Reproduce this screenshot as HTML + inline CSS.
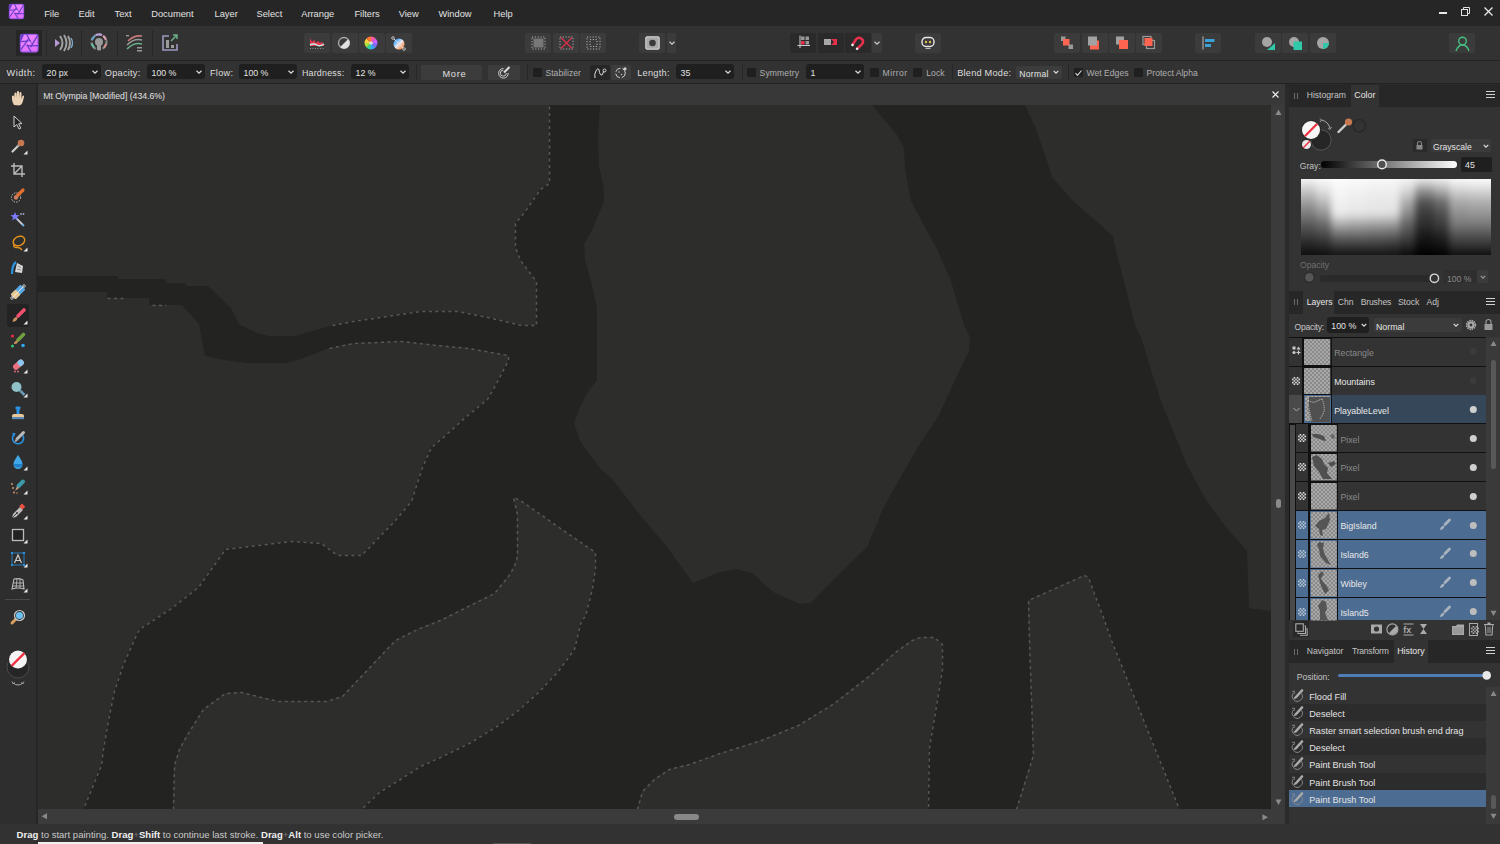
<!DOCTYPE html>
<html><head><meta charset="utf-8">
<style>
*{box-sizing:border-box}
html,body{margin:0;padding:0}
body{width:1500px;height:844px;overflow:hidden;position:relative;background:#2e2e2e;font-family:"Liberation Sans",sans-serif;color:#ddd}
.a{position:absolute}
.t{position:absolute;white-space:nowrap;line-height:1}
svg{position:absolute;overflow:visible}
</style></head><body>
<div class="a" style="left:0px;top:0px;width:1500px;height:26px;background:#262626;"></div>
<svg style="left:9px;top:4px;" width="15" height="15" viewBox="0 0 15 15"><defs><linearGradient id="lg9" x1="0" y1="0" x2="0.3" y2="1"><stop offset="0" stop-color="#f08cff"/><stop offset="1" stop-color="#e070fa"/></linearGradient></defs>
<g transform="scale(0.15)">
<rect x="0" y="0" width="100" height="100" rx="14" fill="url(#lg9)"/>
<path d="M0,14 Q0,0 14,0 L24,0 L0,52 Z" fill="#6a3ec8"/>
<g stroke="#6a3ec8" stroke-width="7" fill="none">
<line x1="36" y1="0" x2="62" y2="52"/>
<line x1="100" y1="2" x2="58" y2="72"/>
<line x1="36" y1="64" x2="100" y2="64"/>
<line x1="38" y1="58" x2="62" y2="100"/>
<line x1="0" y1="92" x2="46" y2="28"/>
<line x1="0" y1="42" x2="58" y2="38"/>
</g>
<circle cx="50" cy="48" r="9" fill="#f08cff"/>
<rect x="1.5" y="1.5" width="97" height="97" rx="13" fill="none" stroke="#7a48d8" stroke-width="5"/>
</g></svg>
<div class="t" style="left:44.20px;top:10.00px;font-size:9.3px;color:#e2e2e2;">File</div>
<div class="t" style="left:78.50px;top:10.00px;font-size:9.3px;color:#e2e2e2;">Edit</div>
<div class="t" style="left:114.50px;top:10.00px;font-size:9.3px;color:#e2e2e2;">Text</div>
<div class="t" style="left:151.20px;top:10.00px;font-size:9.3px;color:#e2e2e2;">Document</div>
<div class="t" style="left:214.50px;top:10.00px;font-size:9.3px;color:#e2e2e2;">Layer</div>
<div class="t" style="left:256.50px;top:10.00px;font-size:9.3px;color:#e2e2e2;">Select</div>
<div class="t" style="left:301.20px;top:10.00px;font-size:9.3px;color:#e2e2e2;">Arrange</div>
<div class="t" style="left:354.40px;top:10.00px;font-size:9.3px;color:#e2e2e2;">Filters</div>
<div class="t" style="left:398.70px;top:10.00px;font-size:9.3px;color:#e2e2e2;">View</div>
<div class="t" style="left:438.50px;top:10.00px;font-size:9.3px;color:#e2e2e2;">Window</div>
<div class="t" style="left:493.50px;top:10.00px;font-size:9.3px;color:#e2e2e2;">Help</div>
<div class="a" style="left:1439px;top:12px;width:8px;height:2px;background:#e8e8e8;"></div>
<svg style="left:1461px;top:7px;" width="9" height="9" viewBox="0 0 9 9"><rect x="0.5" y="2.5" width="6" height="6" fill="none" stroke="#e0e0e0" stroke-width="1"/><polyline points="2.5,2.5 2.5,0.5 8.5,0.5 8.5,6.5 6.5,6.5" fill="none" stroke="#e0e0e0" stroke-width="1"/></svg>
<svg style="left:1484px;top:7px;" width="9" height="9" viewBox="0 0 9 9"><path d="M0.5,0.5 L8.5,8.5 M8.5,0.5 L0.5,8.5" stroke="#e8e8e8" stroke-width="1.3"/></svg>
<div class="a" style="left:0px;top:26px;width:1500px;height:34px;background:#323232;"></div>
<div class="a" style="left:0px;top:60px;width:1500px;height:1px;background:#232323;"></div>
<div class="a" style="left:16px;top:30px;width:26px;height:26px;background:#262626;"></div>
<svg style="left:20px;top:33.7px;" width="18.3" height="18.3" viewBox="0 0 18.3 18.3"><defs><linearGradient id="lg20" x1="0" y1="0" x2="0.3" y2="1"><stop offset="0" stop-color="#f08cff"/><stop offset="1" stop-color="#e070fa"/></linearGradient></defs>
<g transform="scale(0.183)">
<rect x="0" y="0" width="100" height="100" rx="14" fill="url(#lg20)"/>
<path d="M0,14 Q0,0 14,0 L24,0 L0,52 Z" fill="#6a3ec8"/>
<g stroke="#6a3ec8" stroke-width="7" fill="none">
<line x1="36" y1="0" x2="62" y2="52"/>
<line x1="100" y1="2" x2="58" y2="72"/>
<line x1="36" y1="64" x2="100" y2="64"/>
<line x1="38" y1="58" x2="62" y2="100"/>
<line x1="0" y1="92" x2="46" y2="28"/>
<line x1="0" y1="42" x2="58" y2="38"/>
</g>
<circle cx="50" cy="48" r="9" fill="#f08cff"/>
<rect x="1.5" y="1.5" width="97" height="97" rx="13" fill="none" stroke="#7a48d8" stroke-width="5"/>
</g></svg>
<div class="a" style="left:46px;top:30px;width:1px;height:26px;background:#272727;"></div>
<div class="a" style="left:81px;top:30px;width:1px;height:26px;background:#272727;"></div>
<div class="a" style="left:117px;top:30px;width:1px;height:26px;background:#272727;"></div>
<div class="a" style="left:152px;top:30px;width:1px;height:26px;background:#272727;"></div>
<svg style="left:54px;top:33px;" width="20" height="20" viewBox="0 0 20 20"><path d="M1,6 L6,10 L1,14 Z" fill="#b49ad8"/>
<path d="M6,3 Q11,10 6,17" stroke="#a0a0a0" stroke-width="2" fill="none"/>
<path d="M10,2 Q15,10 10,18" stroke="#a0a0a0" stroke-width="2" fill="none"/>
<path d="M14,3 Q18,10 14,17" stroke="#a0a0a0" stroke-width="2" fill="none"/>
<path d="M17,5 Q20,10 17,15" stroke="#7fa8c8" stroke-width="1.4" fill="none"/></svg>
<svg style="left:90px;top:33px;" width="18" height="20" viewBox="0 0 18 20"><circle cx="9" cy="9" r="7.5" fill="none" stroke="#888" stroke-width="2.2" stroke-dasharray="3 2"/>
<path d="M2,7 A7.5,7.5 0 0 1 5,2.8" stroke="#6aa0c8" stroke-width="2.2" fill="none"/>
<path d="M6,2 A7.5,7.5 0 0 1 12,2" stroke="#b9a0d8" stroke-width="2.2" fill="none"/>
<path d="M13,2.8 A7.5,7.5 0 0 1 16,7" stroke="#d8a0b0" stroke-width="2.2" fill="none"/>
<path d="M2,11 A7.5,7.5 0 0 0 4,14.5" stroke="#6ac0a0" stroke-width="2.2" fill="none"/>
<path d="M16,11 A7.5,7.5 0 0 1 14,14.5" stroke="#d89090" stroke-width="2.2" fill="none"/>
<circle cx="9" cy="9" r="4" fill="#9a9a9a"/><rect x="7" y="12" width="4" height="5" fill="#9a9a9a"/></svg>
<svg style="left:125px;top:34px;" width="19" height="18" viewBox="0 0 19 18"><path d="M3,7 Q9,1 17,2" stroke="#c87878" stroke-width="1.6" fill="none"/>
<path d="M2,11 Q9,4 17,6" stroke="#9a9a9a" stroke-width="1.6" fill="none"/>
<path d="M2,15 Q9,8 17,10" stroke="#6ab08a" stroke-width="1.6" fill="none"/>
<rect x="1" y="1" width="3" height="1.4" fill="#999"/><rect x="12" y="13" width="5" height="1.5" fill="#999"/><rect x="12" y="16" width="5" height="1.5" fill="#999"/></svg>
<svg style="left:161px;top:34px;" width="18" height="18" viewBox="0 0 18 18"><path d="M8,2 L2,2 L2,16 L16,16 L16,10" stroke="#9a9ac0" stroke-width="1.6" fill="none"/>
<rect x="5" y="6" width="3" height="8" fill="#9a9a9a"/><rect x="10" y="11" width="3" height="3" fill="#9a9a9a"/>
<path d="M10,7 L16,1 M12,1 L16,1 L16,5" stroke="#6ab08a" stroke-width="1.5" fill="none"/></svg>
<div class="a" style="left:304px;top:33px;width:26px;height:20px;background:#3b3b3b;border-radius:2px"></div>
<div class="a" style="left:331.5px;top:33px;width:26px;height:20px;background:#3b3b3b;border-radius:2px"></div>
<div class="a" style="left:358.5px;top:33px;width:26px;height:20px;background:#3b3b3b;border-radius:2px"></div>
<div class="a" style="left:386px;top:33px;width:26px;height:20px;background:#3b3b3b;border-radius:2px"></div>
<svg style="left:309px;top:36px;" width="17" height="14" viewBox="0 0 17 14"><path d="M1,10 L1,2 L3,6 L5,4 L7,7 L9,5 L11,7 L13,6 L15,9 L15,10 Z" fill="#e8384f"/>
<path d="M1,9 Q5,7 8,9 T15,8" stroke="#bff0e8" stroke-width="1.4" fill="none"/>
<path d="M1,12.5 L15,12.5" stroke="#aaa" stroke-width="0.8" stroke-dasharray="1 1.5"/></svg>
<svg style="left:337px;top:36px;" width="14" height="14" viewBox="0 0 14 14"><circle cx="7" cy="7" r="5.5" fill="none" stroke="#aaa" stroke-width="1.3"/><path d="M11,3.2 A5.5,5.5 0 0 1 3.2,11 Z" fill="#e0e0e0"/></svg>
<svg style="left:364px;top:36px;" width="14" height="14" viewBox="0 0 14 14"><g transform="translate(7,7)">
<path d="M0,0 L0,-6.5 A6.5,6.5 0 0 1 4.6,-4.6 Z" fill="#ff5a9e"/>
<path d="M0,0 L4.6,-4.6 A6.5,6.5 0 0 1 6.5,0 Z" fill="#d060ff"/>
<path d="M0,0 L6.5,0 A6.5,6.5 0 0 1 4.6,4.6 Z" fill="#8a6aff"/>
<path d="M0,0 L4.6,4.6 A6.5,6.5 0 0 1 0,6.5 Z" fill="#40a0ff"/>
<path d="M0,0 L0,6.5 A6.5,6.5 0 0 1 -4.6,4.6 Z" fill="#30d0a0"/>
<path d="M0,0 L-4.6,4.6 A6.5,6.5 0 0 1 -6.5,0 Z" fill="#a8e040"/>
<path d="M0,0 L-6.5,0 A6.5,6.5 0 0 1 -4.6,-4.6 Z" fill="#ffd040"/>
<path d="M0,0 L-4.6,-4.6 A6.5,6.5 0 0 1 0,-6.5 Z" fill="#ff7a30"/>
<circle r="1.8" fill="#ddd"/></g></svg>
<svg style="left:391px;top:36px;" width="15" height="15" viewBox="0 0 15 15"><defs><linearGradient id="gbo" x1="0" y1="0" x2="1" y2="1"><stop offset="0.2" stop-color="#4aa8ff"/><stop offset="0.5" stop-color="#e8e8f0"/><stop offset="0.85" stop-color="#ff8a40"/></linearGradient></defs>
<circle cx="8" cy="8" r="5.5" fill="url(#gbo)"/><line x1="2" y1="2" x2="13" y2="13" stroke="#ddd" stroke-width="1"/><circle cx="2" cy="2" r="1.3" fill="#333" stroke="#ddd" stroke-width="0.8"/><circle cx="13" cy="13" r="1.3" fill="#333" stroke="#ddd" stroke-width="0.8"/></svg>
<div class="a" style="left:525px;top:33px;width:26px;height:20px;background:#3b3b3b;border-radius:2px"></div>
<div class="a" style="left:553px;top:33px;width:26px;height:20px;background:#3b3b3b;border-radius:2px"></div>
<div class="a" style="left:580px;top:33px;width:26px;height:20px;background:#3b3b3b;border-radius:2px"></div>
<svg style="left:531px;top:36px;" width="15" height="14" viewBox="0 0 15 14"><rect x="1" y="1" width="13" height="12" fill="none" stroke="#bbb" stroke-width="0.9" stroke-dasharray="1.2 1.6"/><rect x="2.5" y="2.5" width="10" height="9" fill="#777"/></svg>
<svg style="left:559px;top:36px;" width="15" height="14" viewBox="0 0 15 14"><rect x="1" y="1" width="13" height="12" fill="none" stroke="#bbb" stroke-width="0.9" stroke-dasharray="1.2 1.6"/><path d="M2,1.5 L13,12.5 M13,1.5 L2,12.5" stroke="#d8304a" stroke-width="1.3"/></svg>
<svg style="left:586px;top:36px;" width="15" height="14" viewBox="0 0 15 14"><rect x="1" y="1" width="13" height="12" fill="none" stroke="#bbb" stroke-width="0.9" stroke-dasharray="1.2 1.6"/><rect x="4" y="3.5" width="7" height="7" fill="none" stroke="#bbb" stroke-width="0.9" stroke-dasharray="1.2 1.6"/></svg>
<div class="a" style="left:639px;top:33px;width:26px;height:20px;background:#3b3b3b;border-radius:2px"></div>
<div class="a" style="left:667px;top:33px;width:9px;height:20px;background:#3b3b3b;border-radius:2px"></div>
<svg style="left:645px;top:36px;" width="15" height="14" viewBox="0 0 15 14"><rect x="0.8" y="0.8" width="13.4" height="12.4" rx="1" fill="#a8a8a8" stroke="#dcdcdc" stroke-width="1"/><circle cx="7.5" cy="7" r="3.3" fill="#3a3a3a"/></svg>
<svg style="left:666.5px;top:39px;" width="10" height="8" viewBox="0 0 10 8"><polyline points="2.5,2.75 5,5.25 7.5,2.75" fill="none" stroke="#ccc" stroke-width="1.2"/></svg>
<div class="a" style="left:790px;top:33px;width:26px;height:20px;background:#2a2a2a;border-radius:2px"></div>
<div class="a" style="left:817.7px;top:33px;width:26px;height:20px;background:#2a2a2a;border-radius:2px"></div>
<div class="a" style="left:845px;top:33px;width:26px;height:20px;background:#2a2a2a;border-radius:2px"></div>
<div class="a" style="left:871.7px;top:33px;width:10.3px;height:20px;background:#3b3b3b;border-radius:2px"></div>
<svg style="left:871.8px;top:39px;" width="10" height="8" viewBox="0 0 10 8"><polyline points="2.5,2.75 5,5.25 7.5,2.75" fill="none" stroke="#ccc" stroke-width="1.2"/></svg>
<svg style="left:797px;top:35px;" width="14" height="15" viewBox="0 0 14 15"><rect x="4" y="1.5" width="3.5" height="3.5" fill="#999"/><rect x="8.5" y="1.5" width="3.5" height="3.5" fill="#999"/><rect x="4" y="6" width="3.5" height="3.5" fill="#e8304a"/><rect x="8.5" y="6" width="3.5" height="3.5" fill="#999"/><path d="M3,0.5 L3,13 M0.5,10.5 L13,10.5" stroke="#ddd" stroke-width="0.9"/></svg>
<svg style="left:823px;top:37px;" width="15" height="10" viewBox="0 0 15 10"><rect x="1" y="2" width="7" height="6" fill="#a8a8a8"/><path d="M8,2 L14,2 L14,8 L8,8 L11,5 Z" fill="#e8304a"/></svg>
<svg style="left:851px;top:36px;" width="14" height="14" viewBox="0 0 14 14"><g transform="rotate(40 7 7)"><path d="M4,12 L3.2,6 Q3,1.5 7,1.5 Q11,1.5 10.8,6 L10,12" stroke="#e8304a" stroke-width="2.6" fill="none"/><circle cx="4" cy="12" r="1.3" fill="#eee"/><circle cx="10" cy="12" r="1.3" fill="#eee"/></g></svg>
<div class="a" style="left:915px;top:33px;width:26px;height:20px;background:#3b3b3b;border-radius:2px"></div>
<svg style="left:921px;top:36px;" width="14" height="14" viewBox="0 0 14 14"><rect x="1" y="1.5" width="12" height="9" rx="4" fill="none" stroke="#e8e8e8" stroke-width="1.4"/><circle cx="5" cy="6" r="1.2" fill="#e0c050"/><circle cx="9" cy="6" r="1.2" fill="#e0c050"/><rect x="4.5" y="12" width="5" height="1" fill="#bbb"/></svg>
<div class="a" style="left:1054px;top:33px;width:26px;height:20px;background:#3b3b3b;border-radius:2px"></div>
<div class="a" style="left:1081.7px;top:33px;width:26px;height:20px;background:#3b3b3b;border-radius:2px"></div>
<div class="a" style="left:1109px;top:33px;width:26px;height:20px;background:#3b3b3b;border-radius:2px"></div>
<div class="a" style="left:1136px;top:33px;width:26px;height:20px;background:#3b3b3b;border-radius:2px"></div>
<svg style="left:1060px;top:36px;" width="14" height="14" viewBox="0 0 14 14"><rect x="1" y="0.5" width="4.5" height="4.5" fill="#999"/><rect x="3" y="3" width="6.5" height="6.5" fill="#ff6450"/><rect x="8.5" y="8.5" width="4.5" height="4.5" fill="#999"/></svg>
<svg style="left:1087px;top:36px;" width="14" height="14" viewBox="0 0 14 14"><rect x="3" y="4.5" width="9" height="9" fill="#ff6450"/><rect x="1" y="0.5" width="9" height="9" fill="#a2a2a2"/></svg>
<svg style="left:1115px;top:36px;" width="14" height="14" viewBox="0 0 14 14"><rect x="1" y="0.5" width="8" height="8" fill="#a2a2a2"/><rect x="4" y="4" width="9" height="9" fill="#ff6450"/></svg>
<svg style="left:1142px;top:36px;" width="14" height="14" viewBox="0 0 14 14"><rect x="1" y="0.5" width="8" height="8" fill="none" stroke="#999" stroke-width="1.2"/><rect x="4.5" y="4.5" width="8" height="8" fill="none" stroke="#999" stroke-width="1.2"/><rect x="2.5" y="2" width="8" height="8" fill="#ff6450"/></svg>
<div class="a" style="left:1195.3px;top:33px;width:26px;height:20px;background:#3b3b3b;border-radius:2px"></div>
<svg style="left:1202px;top:36px;" width="13" height="14" viewBox="0 0 13 14"><rect x="0.5" y="0.5" width="1" height="13" fill="#bbb"/><rect x="3" y="3" width="9.5" height="3" fill="#3aa0d8"/><rect x="3" y="8" width="6" height="3" fill="#3aa0d8"/></svg>
<div class="a" style="left:1255px;top:33px;width:26px;height:20px;background:#3b3b3b;border-radius:2px"></div>
<div class="a" style="left:1282px;top:33px;width:26px;height:20px;background:#3b3b3b;border-radius:2px"></div>
<div class="a" style="left:1310px;top:33px;width:26px;height:20px;background:#3b3b3b;border-radius:2px"></div>
<svg style="left:1261px;top:36px;" width="15" height="15" viewBox="0 0 15 15"><path d="M14,7 L14,14 L6,14 Z" fill="#30c8a8"/><circle cx="6" cy="6" r="5" fill="#a5a5a5"/></svg>
<svg style="left:1288px;top:36px;" width="15" height="15" viewBox="0 0 15 15"><circle cx="6" cy="6" r="5" fill="#a5a5a5"/><rect x="5.5" y="5.5" width="8.5" height="8.5" fill="#30c8a8"/></svg>
<svg style="left:1316px;top:36px;" width="15" height="15" viewBox="0 0 15 15"><circle cx="7" cy="7" r="6" fill="#a5a5a5"/><path d="M7,7 L13,7 A6,6 0 0 1 7,13 Z" fill="#30c8a8"/></svg>
<div class="a" style="left:1449px;top:33px;width:26px;height:20px;background:#3b3b3b;border-radius:2px"></div>
<svg style="left:1455px;top:36px;" width="15" height="16" viewBox="0 0 15 16"><circle cx="7.5" cy="5" r="3.8" fill="none" stroke="#45c080" stroke-width="1.4"/><path d="M1,15 Q3,9 7.5,9 Q12,9 14,15" fill="none" stroke="#45c080" stroke-width="1.4"/></svg>
<div class="a" style="left:0px;top:61px;width:1500px;height:22px;background:#323232;"></div>
<div class="a" style="left:0px;top:83px;width:1500px;height:1px;background:#222;"></div>
<div class="t" style="left:6.50px;top:69.00px;font-size:9.2px;color:#dedede;letter-spacing:0.5px">Width:</div>
<div class="a" style="left:42px;top:64px;width:59px;height:15px;background:#1f1f1f;border-radius:3px"></div>
<div class="t" style="left:46.50px;top:69.00px;font-size:8.8px;color:#e4e4e4;">20 px</div>
<svg style="left:90px;top:67.5px;" width="10" height="8" viewBox="0 0 10 8"><polyline points="2.5,2.75 5,5.25 7.5,2.75" fill="none" stroke="#ddd" stroke-width="1.2"/></svg>
<div class="t" style="left:104.80px;top:69.00px;font-size:9.2px;color:#dedede;letter-spacing:0.25px">Opacity:</div>
<div class="a" style="left:147px;top:64px;width:58px;height:15px;background:#1f1f1f;border-radius:3px"></div>
<div class="t" style="left:151.50px;top:69.00px;font-size:8.8px;color:#e4e4e4;">100 %</div>
<svg style="left:194px;top:67.5px;" width="10" height="8" viewBox="0 0 10 8"><polyline points="2.5,2.75 5,5.25 7.5,2.75" fill="none" stroke="#ddd" stroke-width="1.2"/></svg>
<div class="t" style="left:209.90px;top:69.00px;font-size:9.2px;color:#dedede;letter-spacing:0.3px">Flow:</div>
<div class="a" style="left:239px;top:64px;width:58px;height:15px;background:#1f1f1f;border-radius:3px"></div>
<div class="t" style="left:243.50px;top:69.00px;font-size:8.8px;color:#e4e4e4;">100 %</div>
<svg style="left:286px;top:67.5px;" width="10" height="8" viewBox="0 0 10 8"><polyline points="2.5,2.75 5,5.25 7.5,2.75" fill="none" stroke="#ddd" stroke-width="1.2"/></svg>
<div class="t" style="left:301.90px;top:69.00px;font-size:8.9px;color:#dedede;letter-spacing:0.22px">Hardness:</div>
<div class="a" style="left:351px;top:64px;width:58px;height:15px;background:#1f1f1f;border-radius:3px"></div>
<div class="t" style="left:355.50px;top:69.00px;font-size:8.8px;color:#e4e4e4;">12 %</div>
<svg style="left:398px;top:67.5px;" width="10" height="8" viewBox="0 0 10 8"><polyline points="2.5,2.75 5,5.25 7.5,2.75" fill="none" stroke="#ddd" stroke-width="1.2"/></svg>
<div class="a" style="left:416px;top:64px;width:1px;height:16px;background:#272727;"></div>
<div class="a" style="left:421px;top:65px;width:61px;height:15px;background:#3c3c3c;border-radius:2px"></div>
<div class="t" style="left:442.50px;top:70.00px;font-size:9.2px;color:#e0e0e0;letter-spacing:0.7px">More</div>
<div class="a" style="left:488px;top:65px;width:32px;height:15px;background:#3c3c3c;border-radius:2px"></div>
<svg style="left:497px;top:66px;" width="14" height="13" viewBox="0 0 14 13"><path d="M6.5,2.5 A4.8,4.8 0 1 0 11.2,7" fill="none" stroke="#ccc" stroke-width="1"/><path d="M6.3,4.2 A3,3 0 1 0 9.3,7.2" fill="none" stroke="#ccc" stroke-width="1"/><path d="M7,6.5 L12.5,1" stroke="#ddd" stroke-width="2"/></svg>
<div class="a" style="left:527px;top:64px;width:1px;height:16px;background:#272727;"></div>
<div class="a" style="left:532.5px;top:68px;width:9px;height:9px;background:#1f1f1f;border-radius:1px"></div>
<div class="t" style="left:545.50px;top:69.00px;font-size:8.6px;color:#b0b0b0;">Stabilizer</div>
<div class="a" style="left:590px;top:65px;width:20px;height:15px;background:#262626;border-radius:2px"></div>
<svg style="left:593px;top:66px;" width="14" height="13" viewBox="0 0 14 13"><path d="M2,12 Q1,8 3,5 Q5,1 6,4 Q7,10 9,9 Q10,7 11,5" fill="none" stroke="#ddd" stroke-width="1"/><circle cx="11.5" cy="4.5" r="1.5" fill="none" stroke="#ddd" stroke-width="0.9"/></svg>
<div class="a" style="left:611px;top:65px;width:20px;height:15px;background:#3c3c3c;border-radius:2px"></div>
<svg style="left:614px;top:66px;" width="14" height="13" viewBox="0 0 14 13"><circle cx="6.5" cy="7" r="4.8" fill="none" stroke="#ccc" stroke-width="1" stroke-dasharray="6 2"/><circle cx="11" cy="2.8" r="1.6" fill="#ccc"/><circle cx="5" cy="6" r="0.7" fill="#ccc"/><circle cx="7.5" cy="8.5" r="0.7" fill="#ccc"/></svg>
<div class="t" style="left:637.20px;top:69.00px;font-size:9.2px;color:#dedede;letter-spacing:0.28px">Length:</div>
<div class="a" style="left:676px;top:64px;width:58px;height:15px;background:#1f1f1f;border-radius:3px"></div>
<div class="t" style="left:680.50px;top:69.00px;font-size:8.8px;color:#e4e4e4;">35</div>
<svg style="left:723px;top:67.5px;" width="10" height="8" viewBox="0 0 10 8"><polyline points="2.5,2.75 5,5.25 7.5,2.75" fill="none" stroke="#ddd" stroke-width="1.2"/></svg>
<div class="a" style="left:741.5px;top:64px;width:1px;height:16px;background:#272727;"></div>
<div class="a" style="left:746.5px;top:68px;width:9px;height:9px;background:#1f1f1f;border-radius:1px"></div>
<div class="t" style="left:759.60px;top:69.00px;font-size:8.6px;color:#b0b0b0;letter-spacing:0.1px">Symmetry</div>
<div class="a" style="left:806px;top:64px;width:58px;height:15px;background:#1f1f1f;border-radius:3px"></div>
<div class="t" style="left:810.50px;top:69.00px;font-size:8.8px;color:#e4e4e4;">1</div>
<svg style="left:853px;top:67.5px;" width="10" height="8" viewBox="0 0 10 8"><polyline points="2.5,2.75 5,5.25 7.5,2.75" fill="none" stroke="#ddd" stroke-width="1.2"/></svg>
<div class="a" style="left:869.5px;top:68px;width:9px;height:9px;background:#1f1f1f;border-radius:1px"></div>
<div class="t" style="left:882.60px;top:69.00px;font-size:8.6px;color:#b0b0b0;letter-spacing:0.4px">Mirror</div>
<div class="a" style="left:913px;top:68px;width:9px;height:9px;background:#1f1f1f;border-radius:1px"></div>
<div class="t" style="left:926.20px;top:69.00px;font-size:8.6px;color:#b0b0b0;letter-spacing:0.1px">Lock</div>
<div class="a" style="left:951.5px;top:64px;width:1px;height:16px;background:#272727;"></div>
<div class="t" style="left:957.20px;top:69.00px;font-size:9.2px;color:#dedede;letter-spacing:0.23px">Blend Mode:</div>
<div class="a" style="left:1016.4px;top:66px;width:45.2px;height:13px;background:#3c3c3c;border-radius:2px"></div>
<div class="t" style="left:1019.20px;top:70.00px;font-size:8.6px;color:#e4e4e4;letter-spacing:0.33px">Normal</div>
<svg style="left:1050.8px;top:68px;" width="10" height="8" viewBox="0 0 10 8"><polyline points="2.7,2.85 5,5.15 7.3,2.85" fill="none" stroke="#ddd" stroke-width="1.2"/></svg>
<div class="a" style="left:1067.5px;top:64px;width:1px;height:16px;background:#272727;"></div>
<div class="a" style="left:1073.5px;top:68px;width:9px;height:9px;background:#1f1f1f;border-radius:1px"></div>
<svg style="left:1074px;top:69px;" width="9" height="8" viewBox="0 0 9 8"><polyline points="1.5,4 3.5,6.3 7.5,1.5" fill="none" stroke="#ddd" stroke-width="1.1"/></svg>
<div class="t" style="left:1086.60px;top:69.00px;font-size:8.6px;color:#b0b0b0;">Wet Edges</div>
<div class="a" style="left:1133.5px;top:68px;width:9px;height:9px;background:#1f1f1f;border-radius:1px"></div>
<div class="t" style="left:1146.60px;top:69.00px;font-size:8.6px;color:#b0b0b0;">Protect Alpha</div>
<div class="a" style="left:0px;top:84px;width:36px;height:740px;background:#2e2e2e;"></div>
<div class="a" style="left:36px;top:84px;width:2px;height:740px;background:#262626;"></div>
<div class="a" style="left:38px;top:84px;width:1247px;height:21px;background:#383838;"></div>
<div class="t" style="left:43.30px;top:91.60px;font-size:8.7px;color:#e0e0e0;">Mt Olympia [Modified] (434.6%)</div>
<svg style="left:1272px;top:91px;" width="8" height="8" viewBox="0 0 8 8"><path d="M0.5,0.5 L6.5,6.5 M6.5,0.5 L0.5,6.5" stroke="#e8e8e8" stroke-width="1.2"/></svg>
<svg style="left:38px;top:105px" width="1233" height="704" viewBox="38 105 1233 704"><rect x="38" y="105" width="1233" height="704" fill="#232321"/><g fill="#2d2d2c"><polygon points="38,105 549,105 549,183 540,189 524,212 515,223 515,247 520,260 536,281 536,325 521,325 487,317 457,311 420,311 393,315 353,321 332,325 313,331 295,336 268,336 257,333 239,324 231,308 208,286 186,286 186,283 166,283 166,279 118,279 118,276 38,276"/><polygon points="38,292 107,292 107,298 149,298 149,305 182,305 199,324 205,356 224,360 247,363 287,363 301,359 329,348 353,343 401,341 436,345 468,348 508,355 508,360 495,385 487,399 465,417 444,436 431,447 422,467 411,501 395,520 369,547 361,555 337,555 321,543 291,541 225,549 198,587 171,608 139,629 135,637 123,664 114,691 109,715 103,749 101,765 83,809 38,809"/><polygon points="173,809 174,765 179,749 186,736 203,709 225,693 241,692 257,696 278,701 326,701 342,696 395,640 417,629 440,620 472,604 494,593 508,576 514,566 517,556 517,514 513,497 520,500 560,528 595,552 595,568 592,588 585,616 581,620 574,649 557,672 537,693 518,710 498,725 469,743 440,757 420,766 400,779 379,792 361,809"/><polygon points="600,105 872,105 897,135 904,148 905,169 911,201 921,220 937,249 951,281 964,325 970,337 969,351 955,380 939,415 918,447 899,480 883,509 867,547 840,573 811,603 800,604 773,592 752,573 736,569 720,572 693,583 667,547 640,515 613,480 600,468 580,441 574,423 580,407 587,393 597,380 597,308 591,281 585,260 584,244 593,228 604,201 604,188 599,167 598,135"/><polygon points="1025,105 1271,105 1271,611 1255,609 1249,608 1247,551 1225,526 1205,498 1195,480 1187,465 1174,433 1161,401 1150,367 1142,340 1135,325 1124,281 1117,255 1113,236 1073,201 1052,177 1047,161 1036,129"/><polygon points="1028,600 1084,575 1088,577 1092,588 1103,617 1111,640 1179,809 1016,809 1033,755 1029,640"/><polygon points="637,809 642,791 654,779 669,769 689,764 720,753 761,740 798,725 834,703 871,674 895,652 912,640 920,637 934,637 942,644 942,669 934,718 929,747 928,809"/></g><g fill="none" stroke="#575757" stroke-width="1.5" stroke-dasharray="3 3.5" transform="translate(0.5,0.5)"><polyline points="332,325 353,321 393,315 420,311 457,311 487,317 521,325 536,325 536,281 520,260 515,247 515,223 524,212 540,189 549,183 549,105"/><polyline points="107,298 125,298"/><polyline points="152,305 166,305"/><polyline points="329,348 353,343 401,341 436,345 468,348 508,355 508,360 495,385 487,399 465,417 444,436 431,447 422,467 411,501 395,520 369,547 361,555 337,555 321,543 291,541 225,549 198,587 171,608 139,629 135,637 123,664 114,691 109,715 103,749 101,765 83,809"/><polyline points="173,809 174,765 179,749 186,736 203,709 225,693 241,692 257,696 278,701 326,701 342,696 395,640 417,629 440,620 472,604 494,593 508,576 514,566 517,556 517,514 513,497 520,500 560,528 595,552 595,568 592,588 585,616 581,620 574,649 557,672 537,693 518,710 498,725 469,743 440,757 420,766 400,779 379,792 361,809"/><polyline points="1016,809 1033,755 1029,640 1028,600 1084,575 1088,577 1092,588 1103,617 1111,640 1179,809"/><polyline points="637,809 642,791 654,779 669,769 689,764 720,753 761,740 798,725 834,703 871,674 895,652 912,640 920,637 934,637 942,644 942,669 934,718 929,747 928,809"/></g></svg>
<div class="a" style="left:1271px;top:105px;width:14px;height:704px;background:#3b3b3b;"></div>
<div class="a" style="left:38px;top:809px;width:1247px;height:15px;background:#3b3b3b;"></div>
<svg style="left:1275px;top:108px;" width="8" height="8" viewBox="0 0 8 8"><path d="M0.5,7 L3.5,1.5 L6.5,7 Z" fill="#8a8a8a"/></svg>
<svg style="left:1275px;top:799px;" width="8" height="8" viewBox="0 0 8 8"><path d="M0.5,0.5 L3.5,6 L6.5,0.5 Z" fill="#8a8a8a"/></svg>
<div class="a" style="left:1275.8px;top:499px;width:5.4px;height:9px;background:#8a8a8a;border-radius:3px"></div>
<svg style="left:41px;top:813px;" width="7" height="7" viewBox="0 0 7 7"><path d="M6,0.2 L0.5,3.2 L6,6.2 Z" fill="#8a8a8a"/></svg>
<svg style="left:1261.5px;top:814px;" width="7" height="7" viewBox="0 0 7 7"><path d="M0.5,0.2 L6,3.2 L0.5,6.2 Z" fill="#8a8a8a"/></svg>
<div class="a" style="left:674px;top:814px;width:25px;height:6px;background:#888;border-radius:3px"></div>
<div class="a" style="left:1285px;top:84px;width:4px;height:740px;background:#2a2a2a;"></div>
<div class="a" style="left:0px;top:824px;width:1500px;height:20px;background:#323232;"></div>
<div class="t" style="left:16.6px;top:830px;font-size:9.55px;color:#c8c8c8"><b style="color:#f0f0f0">Drag</b> to start painting. <b style="color:#f0f0f0">Drag</b><span style="color:#777">+</span><b style="color:#f0f0f0">Shift</b> to continue last stroke. <b style="color:#f0f0f0">Drag</b><span style="color:#777">+</span><b style="color:#f0f0f0">Alt</b> to use color picker.</div>
<div class="a" style="left:38px;top:842px;width:225px;height:2px;background:#f0f0f0;"></div>
<div class="a" style="left:493px;top:843px;width:38px;height:1px;background:#555;"></div>
<div class="a" style="left:7px;top:304px;width:22px;height:23px;background:#232323;border-radius:3px"></div>
<svg style="left:10px;top:90px;" width="16" height="16" viewBox="0 0 16 16"><path d="M4,15 Q2,12 2,9 L2,6 Q3,5 4,6 L4,9 L4.5,3 Q5.5,2 6.5,3 L6.5,8 L7,1.5 Q8,0.5 9,1.5 L9,8 L9.5,2.5 Q10.5,1.5 11.5,2.5 L11.5,9 L12.5,6 Q13.5,5 14.2,6 L13,11 Q12,15 9,15.5 Z" fill="#ecd2b4"/></svg>
<svg style="left:10px;top:114px;" width="16" height="16" viewBox="0 0 16 16"><path d="M4,2 L4,13 L6.8,10.5 L9,15 L10.8,14.2 L8.6,9.8 L12,9.6 Z" fill="#222" stroke="#d0d0d0" stroke-width="1"/></svg>
<svg style="left:10px;top:138px;" width="16" height="16" viewBox="0 0 16 16"><path d="M2.5,13.5 L9,7" stroke="#cfcfcf" stroke-width="2.2" stroke-linecap="round"/><circle cx="11" cy="5" r="3.3" fill="#c87850"/><path d="M8,8 L7,7" stroke="#888" stroke-width="2"/></svg>
<svg style="left:23px;top:150px;" width="5" height="5" viewBox="0 0 5 5"><path d="M4.5,0.5 L4.5,4.5 L0.5,4.5 Z" fill="#e8e8e8"/></svg>
<svg style="left:10px;top:162px;" width="16" height="16" viewBox="0 0 16 16"><path d="M4,1 L4,12 L15,12 M1,4 L12,4 L12,15 M4,12 L12,4" stroke="#bbb" stroke-width="1.4" fill="none"/></svg>
<svg style="left:10px;top:187px;" width="16" height="16" viewBox="0 0 16 16"><circle cx="6" cy="10.5" r="4.6" fill="none" stroke="#ccc" stroke-width="0.9" stroke-dasharray="1.5 1.2"/><path d="M6,10 L13,3" stroke="#e07030" stroke-width="3.2" stroke-linecap="round"/><circle cx="6" cy="10.5" r="2.2" fill="#c88060"/></svg>
<svg style="left:10px;top:211px;" width="16" height="16" viewBox="0 0 16 16"><path d="M6,7 L13,14" stroke="#ccc" stroke-width="1.8"/><path d="M12,13 L14,15" stroke="#6ab0e0" stroke-width="1.8"/><path d="M5,1 L6.2,4 L9.5,4.2 L7,6.2 L7.8,9.5 L5,7.6 L2.2,9.5 L3,6.2 L0.5,4.2 L3.8,4 Z" fill="#7a7aff"/><circle cx="11" cy="3" r="0.9" fill="#9ac"/><circle cx="13.5" cy="3" r="0.9" fill="#9ac"/></svg>
<svg style="left:10px;top:235px;" width="16" height="16" viewBox="0 0 16 16"><ellipse cx="9" cy="6" rx="6" ry="4.5" fill="none" stroke="#e0901c" stroke-width="1.5" transform="rotate(-25 9 6)"/><path d="M4,9 Q3,13 7,12.5 Q10,12 12,15" fill="none" stroke="#e0901c" stroke-width="1.5"/></svg>
<svg style="left:23px;top:247px;" width="5" height="5" viewBox="0 0 5 5"><path d="M4.5,0.5 L4.5,4.5 L0.5,4.5 Z" fill="#e8e8e8"/></svg>
<svg style="left:10px;top:260px;" width="16" height="16" viewBox="0 0 16 16"><path d="M7,3 L13,6 L12,13 L5,12 Z" fill="#d8d8d8"/><path d="M8,6 L11,7.5 M7,9 L11,10" stroke="#888" stroke-width="1"/><path d="M6,2 Q2,5 2,14" stroke="#2a90e0" stroke-width="2.2" fill="none"/></svg>
<svg style="left:10px;top:284px;" width="16" height="16" viewBox="0 0 16 16"><g transform="rotate(-45 8 8)"><rect x="1" y="4.5" width="14" height="7" rx="1" fill="#5aa8e8"/><rect x="1" y="4.5" width="7" height="7" rx="1" fill="#e8c890"/><line x1="0" y1="8" x2="16" y2="8" stroke="#eee" stroke-width="0.9"/></g><circle cx="2" cy="14" r="1.3" fill="none" stroke="#ddd" stroke-width="0.8"/><circle cx="14" cy="2" r="1.3" fill="none" stroke="#ddd" stroke-width="0.8"/></svg>
<svg style="left:10px;top:308px;" width="16" height="16" viewBox="0 0 16 16"><path d="M8,8 L14,2" stroke="#f0506e" stroke-width="3.6" stroke-linecap="round"/><path d="M2.5,14 Q3,9.5 6.5,9 L7.5,10 Q7,13.5 2.5,14 Z" fill="#c89060"/></svg>
<svg style="left:23px;top:320px;" width="5" height="5" viewBox="0 0 5 5"><path d="M4.5,0.5 L4.5,4.5 L0.5,4.5 Z" fill="#e8e8e8"/></svg>
<svg style="left:10px;top:332px;" width="16" height="16" viewBox="0 0 16 16"><path d="M8,8 L13.5,2.5" stroke="#70a040" stroke-width="3.6" stroke-linecap="round"/><path d="M4,12 Q4,9 7,8.5 L8,9.5 Q7.5,12.5 4,12 Z" fill="#c89060"/><circle cx="2.5" cy="4" r="1.6" fill="#e83040"/><circle cx="2.5" cy="14" r="1.5" fill="#30c870"/><circle cx="13" cy="13.5" r="1.8" fill="#30a8f0"/></svg>
<svg style="left:10px;top:357px;" width="16" height="16" viewBox="0 0 16 16"><g transform="rotate(-40 8 8)"><rect x="2.5" y="5" width="12" height="6" rx="2.5" fill="#ec7080"/><rect x="8.5" y="5" width="6" height="6" rx="2" fill="#8ac8f0"/></g><circle cx="5" cy="14.5" r="0.9" fill="#ec7080"/><circle cx="8" cy="14.5" r="0.9" fill="#ec7080"/></svg>
<svg style="left:23px;top:369px;" width="5" height="5" viewBox="0 0 5 5"><path d="M4.5,0.5 L4.5,4.5 L0.5,4.5 Z" fill="#e8e8e8"/></svg>
<svg style="left:10px;top:381px;" width="16" height="16" viewBox="0 0 16 16"><circle cx="6.5" cy="6" r="5" fill="#90c0c8"/><path d="M10,9.5 L14.5,14" stroke="#6a9ab0" stroke-width="2.6"/></svg>
<svg style="left:23px;top:393px;" width="5" height="5" viewBox="0 0 5 5"><path d="M4.5,0.5 L4.5,4.5 L0.5,4.5 Z" fill="#e8e8e8"/></svg>
<svg style="left:10px;top:405px;" width="16" height="16" viewBox="0 0 16 16"><rect x="5.5" y="1.5" width="5" height="3" rx="1" fill="#2a90e0"/><rect x="6.5" y="4" width="3" height="5" fill="#2a90e0"/><path d="M2,11 Q2,9 4,9 L12,9 Q14,9 14,11 L14,12 L2,12 Z" fill="#e8c898"/><rect x="2" y="12" width="12" height="2.2" fill="#5a8ab8"/></svg>
<svg style="left:10px;top:430px;" width="16" height="16" viewBox="0 0 16 16"><path d="M4.5,4 A5.5,5.5 0 1 0 12.5,5" fill="none" stroke="#2a90e0" stroke-width="1.6"/><path d="M2,3 L5.5,3 L4.5,6.5 Z" fill="#2a90e0"/><path d="M7,9 L13.5,2.5" stroke="#bbb" stroke-width="3" stroke-linecap="round"/><path d="M4.5,12 Q5,9 7,8.5 L8,9.5 Q7,12 4.5,12 Z" fill="#aaa"/></svg>
<svg style="left:10px;top:454px;" width="16" height="16" viewBox="0 0 16 16"><path d="M8,1 Q13,8 12.5,10.5 A4.5,4.5 0 0 1 3.5,10.5 Q3,8 8,1 Z" fill="#40a8e8"/><path d="M3.6,10 A4.5,4.5 0 0 0 12.4,10 Z" fill="#2080c8"/></svg>
<svg style="left:23px;top:466px;" width="5" height="5" viewBox="0 0 5 5"><path d="M4.5,0.5 L4.5,4.5 L0.5,4.5 Z" fill="#e8e8e8"/></svg>
<svg style="left:10px;top:478px;" width="16" height="16" viewBox="0 0 16 16"><path d="M8.5,8 L13,3.5" stroke="#3a9aa8" stroke-width="4" stroke-linecap="round"/><path d="M5,13 L7,8.5 L9,10 Z" fill="#d0a080"/><circle cx="2" cy="6" r="0.9" fill="#e0a070"/><circle cx="3" cy="10" r="0.9" fill="#e0a070"/><circle cx="4" cy="14.5" r="0.9" fill="#e0a070"/><circle cx="7" cy="15" r="0.7" fill="#e0a070"/></svg>
<svg style="left:23px;top:490px;" width="5" height="5" viewBox="0 0 5 5"><path d="M4.5,0.5 L4.5,4.5 L0.5,4.5 Z" fill="#e8e8e8"/></svg>
<svg style="left:10px;top:503px;" width="16" height="16" viewBox="0 0 16 16"><path d="M10,4 L3,11 L2,15 L6,14 L13,7 Z" fill="#bbb"/><path d="M2,15 L7,10" stroke="#333" stroke-width="0.9"/><circle cx="7" cy="10" r="1" fill="#333"/><rect x="10" y="1.5" width="4.5" height="4" transform="rotate(45 12.2 3.5)" fill="#f05040"/></svg>
<svg style="left:23px;top:515px;" width="5" height="5" viewBox="0 0 5 5"><path d="M4.5,0.5 L4.5,4.5 L0.5,4.5 Z" fill="#e8e8e8"/></svg>
<svg style="left:10px;top:527px;" width="16" height="16" viewBox="0 0 16 16"><rect x="2.5" y="2.5" width="11" height="11" fill="#222" stroke="#bbb" stroke-width="1.3"/></svg>
<svg style="left:23px;top:539px;" width="5" height="5" viewBox="0 0 5 5"><path d="M4.5,0.5 L4.5,4.5 L0.5,4.5 Z" fill="#e8e8e8"/></svg>
<svg style="left:10px;top:551px;" width="16" height="16" viewBox="0 0 16 16"><rect x="2" y="2" width="12" height="12" fill="none" stroke="#2a7ab8" stroke-width="1"/><rect x="1" y="1" width="2" height="2" fill="#2a90e0"/><rect x="13" y="1" width="2" height="2" fill="#2a90e0"/><rect x="1" y="13" width="2" height="2" fill="#2a90e0"/><rect x="13" y="13" width="2" height="2" fill="#2a90e0"/><path d="M4.5,12 L8,4 L11.5,12 M5.8,9.5 L10.2,9.5" fill="none" stroke="#ccc" stroke-width="1.2"/></svg>
<svg style="left:23px;top:563px;" width="5" height="5" viewBox="0 0 5 5"><path d="M4.5,0.5 L4.5,4.5 L0.5,4.5 Z" fill="#e8e8e8"/></svg>
<svg style="left:10px;top:576px;" width="16" height="16" viewBox="0 0 16 16"><path d="M4,3 Q9,2 13,4 L14,13 Q9,11 2,13 Z" fill="none" stroke="#bbb" stroke-width="1.1"/><path d="M7,3 L6,12 M10,3 L10,12 M3,7 L14,7 M2.5,10 L14,10" stroke="#bbb" stroke-width="0.9"/></svg>
<svg style="left:23px;top:588px;" width="5" height="5" viewBox="0 0 5 5"><path d="M4.5,0.5 L4.5,4.5 L0.5,4.5 Z" fill="#e8e8e8"/></svg>
<div class="a" style="left:5px;top:599px;width:25px;height:1px;background:#4a4a4a;"></div>
<svg style="left:10px;top:609px;" width="16" height="16" viewBox="0 0 16 16"><path d="M2,14 L6,10" stroke="#d8a060" stroke-width="3" stroke-linecap="round"/><circle cx="9.5" cy="6.5" r="5" fill="#2a2a2a" stroke="#ccc" stroke-width="1.2"/><circle cx="9.5" cy="6.5" r="3.6" fill="#6ac0f0"/></svg>
<svg style="left:6px;top:648px;" width="24" height="42" viewBox="0 0 24 42"><circle cx="12" cy="19" r="11" fill="#262626" stroke="#4a4a4a" stroke-width="1"/>
<circle cx="12" cy="11.5" r="10" fill="#2a2a2a"/>
<circle cx="12" cy="11.5" r="9" fill="#f4f4f4"/>
<path d="M5.6,17.9 L18.4,5.1" stroke="#f03040" stroke-width="2.2"/>
<path d="M7,35 Q12,39 17,35" fill="none" stroke="#aaa" stroke-width="1"/><path d="M6,33.5 L7,35.8 L9,34.5" fill="none" stroke="#aaa" stroke-width="0.9"/><path d="M18,33.5 L17,35.8 L15,34.5" fill="none" stroke="#aaa" stroke-width="0.9"/></svg>
<div class="a" style="left:1289px;top:84px;width:211px;height:740px;background:#333;"></div>
<div class="a" style="left:1289px;top:84px;width:211px;height:1px;background:#2a2a2a;"></div>
<div class="a" style="left:1289px;top:85px;width:211px;height:22px;background:#272727;"></div>
<div class="a" style="left:1294px;top:93px;width:1px;height:6px;background:#6a6a6a;"></div>
<div class="a" style="left:1297px;top:93px;width:1px;height:6px;background:#6a6a6a;"></div>
<div class="a" style="left:1351px;top:85px;width:28px;height:22px;background:#333;"></div>
<div class="t" style="left:1306.70px;top:91.00px;font-size:8.6px;color:#c4c4c4;">Histogram</div>
<div class="t" style="left:1354.30px;top:91.00px;font-size:8.8px;color:#e8e8e8;">Color</div>
<div class="a" style="left:1486px;top:91px;width:8.5px;height:1.4px;background:#d0d0d0;"></div>
<div class="a" style="left:1486px;top:94px;width:8.5px;height:1.4px;background:#d0d0d0;"></div>
<div class="a" style="left:1486px;top:97px;width:8.5px;height:1.4px;background:#d0d0d0;"></div>
<svg style="left:1298px;top:117px;" width="38" height="38" viewBox="0 0 38 38"><circle cx="23" cy="23" r="10.2" fill="#262626" stroke="#555" stroke-width="1"/>
<circle cx="13" cy="13" r="10.3" fill="#2a2a2a"/>
<circle cx="13" cy="13" r="9" fill="#f6f6f6"/>
<path d="M6.8,19.2 L19.2,6.8" stroke="#f03040" stroke-width="2.2"/>
<circle cx="8.5" cy="27.5" r="5.3" fill="#2a2a2a"/><circle cx="8.5" cy="27.5" r="4.5" fill="#e8e8e8"/><path d="M5.3,30.7 L11.7,24.3" stroke="#f03040" stroke-width="1.5"/>
<path d="M23.5,3 Q30,4.5 32,11" fill="none" stroke="#aaa" stroke-width="1"/><path d="M22,1.5 L23.5,3 L22,5" fill="none" stroke="#aaa" stroke-width="0.9"/><path d="M30,11 L32,12.5 L33.5,10" fill="none" stroke="#aaa" stroke-width="0.9"/></svg>
<svg style="left:1336px;top:117px;" width="30" height="20" viewBox="0 0 30 20"><path d="M2.5,15 L10,7.5" stroke="#cfcfcf" stroke-width="2.4" stroke-linecap="round"/><circle cx="12.5" cy="5" r="3.6" fill="#c87850"/><circle cx="23.2" cy="8.7" r="6.2" fill="#333" stroke="#262626" stroke-width="1.2"/></svg>
<div class="a" style="left:1412.6px;top:138.6px;width:14px;height:13.6px;background:#2a2a2a;"></div>
<svg style="left:1415px;top:140px;" width="9" height="10" viewBox="0 0 9 10"><path d="M2.5,5 L2.5,3.5 A2,2 0 0 1 6.5,3.5 L6.5,5" fill="none" stroke="#888" stroke-width="1.1"/><rect x="1.5" y="5" width="6" height="4.5" fill="#888"/></svg>
<div class="a" style="left:1430.5px;top:139px;width:60.5px;height:13.2px;background:#3b3b3b;border-radius:2px"></div>
<div class="t" style="left:1433.00px;top:142.50px;font-size:8.6px;color:#e4e4e4;">Grayscale</div>
<svg style="left:1480.5px;top:141.5px;" width="10" height="8" viewBox="0 0 10 8"><polyline points="2.7,2.85 5,5.15 7.3,2.85" fill="none" stroke="#ddd" stroke-width="1.2"/></svg>
<div class="t" style="left:1299.80px;top:162.00px;font-size:8.6px;color:#c0c0c0;">Gray:</div>
<div class="a" style="left:1321px;top:160.8px;width:136px;height:7.5px;border-radius:4px;background:linear-gradient(90deg,#000,#fff)"></div>
<svg style="left:1376px;top:158px;" width="12" height="12" viewBox="0 0 12 12"><circle cx="6" cy="6.4" r="4.3" fill="#505050" stroke="#e8e8e8" stroke-width="1.5"/></svg>
<div class="a" style="left:1461px;top:156.5px;width:31px;height:15px;background:#1f1f1f;border-radius:2px"></div>
<div class="t" style="left:1465.00px;top:161.00px;font-size:8.8px;color:#e4e4e4;">45</div>
<div class="a" style="left:1300.7px;top:178.9px;width:190.7px;height:75.8px;overflow:hidden;background:#777"><div class="a" style="left:-10px;top:-10px;width:210.7px;height:95.8px;filter:blur(3.5px)"><div class="a" style="left:0.0px;top:0;width:25.8px;height:95.8px;background:linear-gradient(180deg,rgb(245,245,245) 10.0px,rgb(200,200,200) 21.4px,rgb(160,160,160) 32.7px,rgb(125,125,125) 44.1px,rgb(90,90,90) 55.5px,rgb(60,60,60) 66.8px,rgb(30,30,30) 78.2px,rgb(15,15,15) 85.8px)"></div><div class="a" style="left:25.3px;top:0;width:15.8px;height:95.8px;background:linear-gradient(180deg,rgb(250,250,250) 10.0px,rgb(225,225,225) 21.4px,rgb(190,190,190) 32.7px,rgb(150,150,150) 44.1px,rgb(105,105,105) 55.5px,rgb(70,70,70) 66.8px,rgb(35,35,35) 78.2px,rgb(15,15,15) 85.8px)"></div><div class="a" style="left:40.5px;top:0;width:17.7px;height:95.8px;background:linear-gradient(180deg,rgb(252,252,252) 10.0px,rgb(246,246,246) 21.4px,rgb(240,240,240) 32.7px,rgb(236,236,236) 44.1px,rgb(172,172,172) 55.5px,rgb(105,105,105) 66.8px,rgb(50,50,50) 78.2px,rgb(20,20,20) 85.8px)"></div><div class="a" style="left:57.7px;top:0;width:19.6px;height:95.8px;background:linear-gradient(180deg,rgb(250,250,250) 10.0px,rgb(242,242,242) 21.4px,rgb(236,236,236) 32.7px,rgb(230,230,230) 44.1px,rgb(165,165,165) 55.5px,rgb(105,105,105) 66.8px,rgb(50,50,50) 78.2px,rgb(20,20,20) 85.8px)"></div><div class="a" style="left:76.7px;top:0;width:19.6px;height:95.8px;background:linear-gradient(180deg,rgb(248,248,248) 10.0px,rgb(238,238,238) 21.4px,rgb(232,232,232) 32.7px,rgb(228,228,228) 44.1px,rgb(160,160,160) 55.5px,rgb(100,100,100) 66.8px,rgb(50,50,50) 78.2px,rgb(20,20,20) 85.8px)"></div><div class="a" style="left:95.8px;top:0;width:13.8px;height:95.8px;background:linear-gradient(180deg,rgb(248,248,248) 10.0px,rgb(238,238,238) 21.4px,rgb(232,232,232) 32.7px,rgb(225,225,225) 44.1px,rgb(155,155,155) 55.5px,rgb(95,95,95) 66.8px,rgb(45,45,45) 78.2px,rgb(20,20,20) 85.8px)"></div><div class="a" style="left:109.2px;top:0;width:15.8px;height:95.8px;background:linear-gradient(180deg,rgb(245,245,245) 10.0px,rgb(215,215,215) 21.4px,rgb(175,175,175) 32.7px,rgb(140,140,140) 44.1px,rgb(100,100,100) 55.5px,rgb(70,70,70) 66.8px,rgb(35,35,35) 78.2px,rgb(12,12,12) 85.8px)"></div><div class="a" style="left:124.4px;top:0;width:19.6px;height:95.8px;background:linear-gradient(180deg,rgb(235,235,235) 10.0px,rgb(150,150,150) 21.4px,rgb(85,85,85) 32.7px,rgb(60,60,60) 44.1px,rgb(45,45,45) 55.5px,rgb(25,25,25) 66.8px,rgb(10,10,10) 78.2px,rgb(0,0,0) 85.8px)"></div><div class="a" style="left:143.5px;top:0;width:15.8px;height:95.8px;background:linear-gradient(180deg,rgb(240,240,240) 10.0px,rgb(175,175,175) 21.4px,rgb(110,110,110) 32.7px,rgb(80,80,80) 44.1px,rgb(60,60,60) 55.5px,rgb(35,35,35) 66.8px,rgb(15,15,15) 78.2px,rgb(3,3,3) 85.8px)"></div><div class="a" style="left:158.7px;top:0;width:19.6px;height:95.8px;background:linear-gradient(180deg,rgb(250,250,250) 10.0px,rgb(210,210,210) 21.4px,rgb(170,170,170) 32.7px,rgb(145,145,145) 44.1px,rgb(120,120,120) 55.5px,rgb(80,80,80) 66.8px,rgb(45,45,45) 78.2px,rgb(15,15,15) 85.8px)"></div><div class="a" style="left:177.8px;top:0;width:33.4px;height:95.8px;background:linear-gradient(180deg,rgb(252,252,252) 10.0px,rgb(215,215,215) 21.4px,rgb(175,175,175) 32.7px,rgb(150,150,150) 44.1px,rgb(120,120,120) 55.5px,rgb(80,80,80) 66.8px,rgb(45,45,45) 78.2px,rgb(15,15,15) 85.8px)"></div></div></div>
<div class="t" style="left:1300.00px;top:261.00px;font-size:8.6px;color:#6e6e6e;">Opacity</div>
<svg style="left:1303px;top:271px;" width="13" height="13" viewBox="0 0 13 13"><circle cx="6.3" cy="6.3" r="5" fill="#555" stroke="#2a2a2a" stroke-width="1.2"/></svg>
<div class="a" style="left:1320.4px;top:275.2px;width:117px;height:6.5px;background:#2a2a2a;border-radius:3px"></div>
<svg style="left:1429px;top:273px;" width="11" height="11" viewBox="0 0 11 11"><circle cx="5.4" cy="5.3" r="4.2" fill="#333" stroke="#d8d8d8" stroke-width="1.4"/></svg>
<div class="a" style="left:1443.3px;top:270px;width:33.4px;height:13.2px;background:#2f2f2f;"></div>
<div class="t" style="left:1447.00px;top:274.50px;font-size:8.6px;color:#8a8a8a;">100 %</div>
<div class="a" style="left:1477.2px;top:270px;width:10.8px;height:13.2px;background:#3b3b3b;"></div>
<svg style="left:1477.6px;top:272.5px;" width="10" height="8" viewBox="0 0 10 8"><polyline points="2.8,2.9 5,5.1 7.2,2.9" fill="none" stroke="#999" stroke-width="1.2"/></svg>
<div class="a" style="left:1289px;top:287px;width:211px;height:4px;background:#333;"></div>
<div class="a" style="left:1289px;top:291px;width:211px;height:23px;background:#272727;"></div>
<div class="a" style="left:1294px;top:299px;width:1px;height:6px;background:#6a6a6a;"></div>
<div class="a" style="left:1297px;top:299px;width:1px;height:6px;background:#6a6a6a;"></div>
<div class="a" style="left:1303px;top:291px;width:31.4px;height:23px;background:#333;"></div>
<div class="t" style="left:1306.70px;top:298.00px;font-size:8.6px;color:#e8e8e8;">Layers</div>
<div class="t" style="left:1337.70px;top:298.00px;font-size:8.6px;color:#c4c4c4;">Chn</div>
<div class="t" style="left:1360.70px;top:298.00px;font-size:8.6px;color:#c4c4c4;letter-spacing:-0.15px">Brushes</div>
<div class="t" style="left:1397.90px;top:298.00px;font-size:8.6px;color:#c4c4c4;">Stock</div>
<div class="t" style="left:1426.60px;top:298.00px;font-size:8.6px;color:#c4c4c4;">Adj</div>
<div class="a" style="left:1486px;top:298px;width:8.5px;height:1.4px;background:#d0d0d0;"></div>
<div class="a" style="left:1486px;top:301px;width:8.5px;height:1.4px;background:#d0d0d0;"></div>
<div class="a" style="left:1486px;top:304px;width:8.5px;height:1.4px;background:#d0d0d0;"></div>
<div class="t" style="left:1294.60px;top:322.50px;font-size:8.6px;color:#c4c4c4;letter-spacing:-0.3px">Opacity:</div>
<div class="a" style="left:1326.9px;top:317.2px;width:42.4px;height:15.4px;background:#1f1f1f;border-radius:3px"></div>
<div class="t" style="left:1331.30px;top:322.00px;font-size:8.8px;color:#e4e4e4;">100 %</div>
<svg style="left:1359px;top:320.5px;" width="10" height="8" viewBox="0 0 10 8"><polyline points="2.7,2.85 5,5.15 7.3,2.85" fill="none" stroke="#ddd" stroke-width="1.2"/></svg>
<div class="a" style="left:1373.9px;top:318.2px;width:87.7px;height:13.7px;background:#3b3b3b;border-radius:2px"></div>
<div class="t" style="left:1376.00px;top:322.50px;font-size:8.8px;color:#e4e4e4;">Normal</div>
<svg style="left:1451px;top:320.5px;" width="10" height="8" viewBox="0 0 10 8"><polyline points="2.7,2.85 5,5.15 7.3,2.85" fill="none" stroke="#ddd" stroke-width="1.2"/></svg>
<svg style="left:1465px;top:319px;" width="12" height="12" viewBox="0 0 12 12"><circle cx="6" cy="6" r="4.3" fill="none" stroke="#aaa" stroke-width="1.8" stroke-dasharray="1.5 0.75"/><circle cx="6" cy="6" r="3.4" fill="#aaa"/><circle cx="6" cy="6" r="1.4" fill="#333"/></svg>
<svg style="left:1483px;top:318px;" width="11" height="13" viewBox="0 0 11 13"><path d="M3,6.5 L3,4 A2.5,2.5 0 0 1 8,4 L8,6.5" fill="none" stroke="#999" stroke-width="1.2"/><rect x="1.5" y="6" width="8" height="6" fill="#999"/></svg>
<div class="a" style="left:1289px;top:337px;width:197px;height:283px;background:#111;"></div>
<div class="a" style="left:1486px;top:337px;width:14px;height:283px;background:#3a3a3a;"></div>
<svg style="left:1490px;top:340px;" width="8" height="7" viewBox="0 0 8 7"><path d="M0.5,6 L3.5,0.8 L6.5,6 Z" fill="#888"/></svg>
<svg style="left:1490px;top:610px;" width="8" height="7" viewBox="0 0 8 7"><path d="M0.5,0.8 L3.5,6 L6.5,0.8 Z" fill="#888"/></svg>
<div class="a" style="left:1490.8px;top:360.2px;width:5.4px;height:109.2px;background:#585858;border-radius:3px"></div>
<div class="a" style="left:1289.3px;top:337.6px;width:13.2px;height:28.1px;background:#333;"></div>
<div class="a" style="left:1332px;top:337.6px;width:153.7px;height:28.1px;background:#333;"></div>
<svg style="left:1304.3px;top:338.6px" width="26.3" height="26"><defs><pattern id="ck0" width="4" height="4" patternUnits="userSpaceOnUse"><rect width="4" height="4" fill="#a8a8a8"/><rect width="2" height="2" fill="#8a8a8a"/><rect x="2" y="2" width="2" height="2" fill="#8a8a8a"/></pattern></defs><rect width="26.3" height="26" fill="url(#ck0)"/></svg>
<div class="t" style="left:1334.20px;top:348.80px;font-size:8.8px;color:#8a8a8a;">Rectangle</div>
<svg style="left:1469px;top:347.1px;" width="9" height="9" viewBox="0 0 9 9"><circle cx="4.3" cy="4.5" r="3.5" fill="#3b3b3b"/></svg>
<div class="a" style="left:1289.3px;top:366.5px;width:13.2px;height:28.1px;background:#333;"></div>
<div class="a" style="left:1332px;top:366.5px;width:153.7px;height:28.1px;background:#333;"></div>
<svg style="left:1304.3px;top:367.5px" width="26.3" height="26"><defs><pattern id="ck1" width="4" height="4" patternUnits="userSpaceOnUse"><rect width="4" height="4" fill="#a8a8a8"/><rect width="2" height="2" fill="#8a8a8a"/><rect x="2" y="2" width="2" height="2" fill="#8a8a8a"/></pattern></defs><rect width="26.3" height="26" fill="url(#ck1)"/></svg>
<div class="t" style="left:1334.20px;top:377.70px;font-size:8.8px;color:#e8e8e8;">Mountains</div>
<svg style="left:1469px;top:376.0px;" width="9" height="9" viewBox="0 0 9 9"><circle cx="4.3" cy="4.5" r="3.5" fill="#3b3b3b"/></svg>
<div class="a" style="left:1289.3px;top:395.40000000000003px;width:13.2px;height:28.1px;background:#4a4a4a;"></div>
<div class="a" style="left:1332px;top:395.40000000000003px;width:153.7px;height:28.1px;background:#37475a;"></div>
<svg style="left:1304.3px;top:396.40000000000003px" width="26.3" height="26"><defs><pattern id="ck2" width="4" height="4" patternUnits="userSpaceOnUse"><rect width="4" height="4" fill="#a8a8a8"/><rect width="2" height="2" fill="#8a8a8a"/><rect x="2" y="2" width="2" height="2" fill="#8a8a8a"/></pattern></defs><rect width="26.3" height="26" fill="url(#ck2)"/></svg>
<div class="a" style="left:1304px;top:395.40000000000003px;width:27px;height:28.1px;background:#4a6a90;"></div>
<svg style="left:1305.3px;top:396.40000000000003px" width="25" height="25"><defs><pattern id="ck2b" width="4" height="4" patternUnits="userSpaceOnUse"><rect width="4" height="4" fill="#a8a8a8"/><rect width="2" height="2" fill="#8a8a8a"/><rect x="2" y="2" width="2" height="2" fill="#8a8a8a"/></pattern></defs><rect width="25" height="25" fill="url(#ck2b)"/></svg>
<div class="t" style="left:1334.20px;top:406.60px;font-size:8.8px;color:#e8e8e8;">PlayableLevel</div>
<svg style="left:1469px;top:404.90000000000003px;" width="9" height="9" viewBox="0 0 9 9"><circle cx="4.3" cy="4.5" r="3.5" fill="#cfcfcf"/></svg>
<div class="a" style="left:1296px;top:424.3px;width:12px;height:28.1px;background:#333;"></div>
<div class="a" style="left:1338px;top:424.3px;width:147.7px;height:28.1px;background:#333;"></div>
<svg style="left:1310.6px;top:425.1px" width="25.8" height="26.5"><defs><pattern id="ck3" width="4" height="4" patternUnits="userSpaceOnUse"><rect width="4" height="4" fill="#a8a8a8"/><rect width="2" height="2" fill="#8a8a8a"/><rect x="2" y="2" width="2" height="2" fill="#8a8a8a"/></pattern></defs><rect width="25.8" height="26.5" fill="url(#ck3)"/></svg>
<div class="t" style="left:1340.40px;top:435.50px;font-size:8.8px;color:#8a8a8a;">Pixel</div>
<svg style="left:1469px;top:433.8px;" width="9" height="9" viewBox="0 0 9 9"><circle cx="4.3" cy="4.5" r="3.5" fill="#cfcfcf"/></svg>
<div class="a" style="left:1296px;top:453.20000000000005px;width:12px;height:28.1px;background:#333;"></div>
<div class="a" style="left:1338px;top:453.20000000000005px;width:147.7px;height:28.1px;background:#333;"></div>
<svg style="left:1310.6px;top:454.00000000000006px" width="25.8" height="26.5"><defs><pattern id="ck4" width="4" height="4" patternUnits="userSpaceOnUse"><rect width="4" height="4" fill="#a8a8a8"/><rect width="2" height="2" fill="#8a8a8a"/><rect x="2" y="2" width="2" height="2" fill="#8a8a8a"/></pattern></defs><rect width="25.8" height="26.5" fill="url(#ck4)"/></svg>
<div class="t" style="left:1340.40px;top:464.40px;font-size:8.8px;color:#8a8a8a;">Pixel</div>
<svg style="left:1469px;top:462.70000000000005px;" width="9" height="9" viewBox="0 0 9 9"><circle cx="4.3" cy="4.5" r="3.5" fill="#cfcfcf"/></svg>
<div class="a" style="left:1296px;top:482.1px;width:12px;height:28.1px;background:#333;"></div>
<div class="a" style="left:1338px;top:482.1px;width:147.7px;height:28.1px;background:#333;"></div>
<svg style="left:1310.6px;top:482.90000000000003px" width="25.8" height="26.5"><defs><pattern id="ck5" width="4" height="4" patternUnits="userSpaceOnUse"><rect width="4" height="4" fill="#a8a8a8"/><rect width="2" height="2" fill="#8a8a8a"/><rect x="2" y="2" width="2" height="2" fill="#8a8a8a"/></pattern></defs><rect width="25.8" height="26.5" fill="url(#ck5)"/></svg>
<div class="t" style="left:1340.40px;top:493.30px;font-size:8.8px;color:#8a8a8a;">Pixel</div>
<svg style="left:1469px;top:491.6px;" width="9" height="9" viewBox="0 0 9 9"><circle cx="4.3" cy="4.5" r="3.5" fill="#cfcfcf"/></svg>
<div class="a" style="left:1296px;top:511.0px;width:12px;height:28.1px;background:#4d6c91;"></div>
<div class="a" style="left:1338px;top:511.0px;width:147.7px;height:28.1px;background:#4d6c91;"></div>
<div class="a" style="left:1309.6px;top:511.0px;width:27.6px;height:28.1px;background:#4d6c91;"></div>
<svg style="left:1310.6px;top:511.8px" width="25.8" height="26.5"><defs><pattern id="ck6" width="4" height="4" patternUnits="userSpaceOnUse"><rect width="4" height="4" fill="#a8a8a8"/><rect width="2" height="2" fill="#8a8a8a"/><rect x="2" y="2" width="2" height="2" fill="#8a8a8a"/></pattern></defs><rect width="25.8" height="26.5" fill="url(#ck6)"/></svg>
<div class="t" style="left:1340.40px;top:522.20px;font-size:8.8px;color:#e8e8e8;">BigIsland</div>
<svg style="left:1469px;top:520.5px;" width="9" height="9" viewBox="0 0 9 9"><circle cx="4.3" cy="4.5" r="3.5" fill="#bdbdbd"/></svg>
<svg style="left:1439px;top:519.0px;" width="12" height="12" viewBox="0 0 12 12"><path d="M6,5.5 L10.5,1" stroke="#a9b3bf" stroke-width="2.8" stroke-linecap="round"/><path d="M1,11 Q1.2,7.5 4.5,6.5 L5.5,7.5 Q4.5,10.8 1,11 Z" fill="#a9b3bf"/></svg>
<div class="a" style="left:1296px;top:539.9px;width:12px;height:28.1px;background:#4d6c91;"></div>
<div class="a" style="left:1338px;top:539.9px;width:147.7px;height:28.1px;background:#4d6c91;"></div>
<div class="a" style="left:1309.6px;top:539.9px;width:27.6px;height:28.1px;background:#4d6c91;"></div>
<svg style="left:1310.6px;top:540.6999999999999px" width="25.8" height="26.5"><defs><pattern id="ck7" width="4" height="4" patternUnits="userSpaceOnUse"><rect width="4" height="4" fill="#a8a8a8"/><rect width="2" height="2" fill="#8a8a8a"/><rect x="2" y="2" width="2" height="2" fill="#8a8a8a"/></pattern></defs><rect width="25.8" height="26.5" fill="url(#ck7)"/></svg>
<div class="t" style="left:1340.40px;top:551.10px;font-size:8.8px;color:#e8e8e8;">Island6</div>
<svg style="left:1469px;top:549.4px;" width="9" height="9" viewBox="0 0 9 9"><circle cx="4.3" cy="4.5" r="3.5" fill="#bdbdbd"/></svg>
<svg style="left:1439px;top:547.9px;" width="12" height="12" viewBox="0 0 12 12"><path d="M6,5.5 L10.5,1" stroke="#a9b3bf" stroke-width="2.8" stroke-linecap="round"/><path d="M1,11 Q1.2,7.5 4.5,6.5 L5.5,7.5 Q4.5,10.8 1,11 Z" fill="#a9b3bf"/></svg>
<div class="a" style="left:1296px;top:568.8px;width:12px;height:28.1px;background:#4d6c91;"></div>
<div class="a" style="left:1338px;top:568.8px;width:147.7px;height:28.1px;background:#4d6c91;"></div>
<div class="a" style="left:1309.6px;top:568.8px;width:27.6px;height:28.1px;background:#4d6c91;"></div>
<svg style="left:1310.6px;top:569.5999999999999px" width="25.8" height="26.5"><defs><pattern id="ck8" width="4" height="4" patternUnits="userSpaceOnUse"><rect width="4" height="4" fill="#a8a8a8"/><rect width="2" height="2" fill="#8a8a8a"/><rect x="2" y="2" width="2" height="2" fill="#8a8a8a"/></pattern></defs><rect width="25.8" height="26.5" fill="url(#ck8)"/></svg>
<div class="t" style="left:1340.40px;top:580.00px;font-size:8.8px;color:#e8e8e8;">Wibley</div>
<svg style="left:1469px;top:578.3px;" width="9" height="9" viewBox="0 0 9 9"><circle cx="4.3" cy="4.5" r="3.5" fill="#bdbdbd"/></svg>
<svg style="left:1439px;top:576.8px;" width="12" height="12" viewBox="0 0 12 12"><path d="M6,5.5 L10.5,1" stroke="#a9b3bf" stroke-width="2.8" stroke-linecap="round"/><path d="M1,11 Q1.2,7.5 4.5,6.5 L5.5,7.5 Q4.5,10.8 1,11 Z" fill="#a9b3bf"/></svg>
<div class="a" style="left:1296px;top:597.7px;width:12px;height:22.299999999999955px;background:#4d6c91;"></div>
<div class="a" style="left:1338px;top:597.7px;width:147.7px;height:22.299999999999955px;background:#4d6c91;"></div>
<div class="a" style="left:1309.6px;top:597.7px;width:27.6px;height:22.299999999999955px;background:#4d6c91;"></div>
<svg style="left:1310.6px;top:598.5px" width="25.8" height="21.499999999999954"><defs><pattern id="ck9" width="4" height="4" patternUnits="userSpaceOnUse"><rect width="4" height="4" fill="#a8a8a8"/><rect width="2" height="2" fill="#8a8a8a"/><rect x="2" y="2" width="2" height="2" fill="#8a8a8a"/></pattern></defs><rect width="25.8" height="21.499999999999954" fill="url(#ck9)"/></svg>
<div class="t" style="left:1340.40px;top:608.90px;font-size:8.8px;color:#e8e8e8;">Island5</div>
<svg style="left:1469px;top:607.2px;" width="9" height="9" viewBox="0 0 9 9"><circle cx="4.3" cy="4.5" r="3.5" fill="#bdbdbd"/></svg>
<svg style="left:1439px;top:605.7px;" width="12" height="12" viewBox="0 0 12 12"><path d="M6,5.5 L10.5,1" stroke="#a9b3bf" stroke-width="2.8" stroke-linecap="round"/><path d="M1,11 Q1.2,7.5 4.5,6.5 L5.5,7.5 Q4.5,10.8 1,11 Z" fill="#a9b3bf"/></svg>
<div class="a" style="left:1290px;top:424.5px;width:5px;height:195.5px;background:#4a4a4a;"></div>
<svg style="left:1292px;top:346px;" width="9" height="9" viewBox="0 0 9 9"><rect x="0.5" y="0.5" width="3" height="3" fill="#ccc"/><path d="M6.5,0.5 L8.5,3.5 L4.5,3.5 Z" fill="#ccc"/><circle cx="2" cy="6.5" r="1.6" fill="#ccc"/><path d="M6.5,4.5 L6.5,8.5 M4.5,6.5 L8.5,6.5" stroke="#ccc" stroke-width="1.2"/></svg>
<svg style="left:1292px;top:377px;" width="8" height="8" viewBox="0 0 8 8"><rect x="1.6" y="0.0" width="1.6" height="1.6" fill="#ddd"/><rect x="4.800000000000001" y="0.0" width="1.6" height="1.6" fill="#ddd"/><rect x="0.0" y="1.6" width="1.6" height="1.6" fill="#ddd"/><rect x="3.2" y="1.6" width="1.6" height="1.6" fill="#ddd"/><rect x="6.4" y="1.6" width="1.6" height="1.6" fill="#ddd"/><rect x="1.6" y="3.2" width="1.6" height="1.6" fill="#ddd"/><rect x="4.800000000000001" y="3.2" width="1.6" height="1.6" fill="#ddd"/><rect x="0.0" y="4.800000000000001" width="1.6" height="1.6" fill="#ddd"/><rect x="3.2" y="4.800000000000001" width="1.6" height="1.6" fill="#ddd"/><rect x="6.4" y="4.800000000000001" width="1.6" height="1.6" fill="#ddd"/><rect x="1.6" y="6.4" width="1.6" height="1.6" fill="#ddd"/><rect x="4.800000000000001" y="6.4" width="1.6" height="1.6" fill="#ddd"/></svg>
<svg style="left:1292px;top:406px;" width="9" height="7" viewBox="0 0 9 7"><polyline points="1.5,2 4.5,5 7.5,2" fill="none" stroke="#aaa" stroke-width="1"/></svg>
<svg style="left:1298px;top:434.3px;" width="8" height="8" viewBox="0 0 8 8"><rect x="1.6" y="0.0" width="1.6" height="1.6" fill="#ddd"/><rect x="4.800000000000001" y="0.0" width="1.6" height="1.6" fill="#ddd"/><rect x="0.0" y="1.6" width="1.6" height="1.6" fill="#ddd"/><rect x="3.2" y="1.6" width="1.6" height="1.6" fill="#ddd"/><rect x="6.4" y="1.6" width="1.6" height="1.6" fill="#ddd"/><rect x="1.6" y="3.2" width="1.6" height="1.6" fill="#ddd"/><rect x="4.800000000000001" y="3.2" width="1.6" height="1.6" fill="#ddd"/><rect x="0.0" y="4.800000000000001" width="1.6" height="1.6" fill="#ddd"/><rect x="3.2" y="4.800000000000001" width="1.6" height="1.6" fill="#ddd"/><rect x="6.4" y="4.800000000000001" width="1.6" height="1.6" fill="#ddd"/><rect x="1.6" y="6.4" width="1.6" height="1.6" fill="#ddd"/><rect x="4.800000000000001" y="6.4" width="1.6" height="1.6" fill="#ddd"/></svg>
<svg style="left:1298px;top:463.20000000000005px;" width="8" height="8" viewBox="0 0 8 8"><rect x="1.6" y="0.0" width="1.6" height="1.6" fill="#ddd"/><rect x="4.800000000000001" y="0.0" width="1.6" height="1.6" fill="#ddd"/><rect x="0.0" y="1.6" width="1.6" height="1.6" fill="#ddd"/><rect x="3.2" y="1.6" width="1.6" height="1.6" fill="#ddd"/><rect x="6.4" y="1.6" width="1.6" height="1.6" fill="#ddd"/><rect x="1.6" y="3.2" width="1.6" height="1.6" fill="#ddd"/><rect x="4.800000000000001" y="3.2" width="1.6" height="1.6" fill="#ddd"/><rect x="0.0" y="4.800000000000001" width="1.6" height="1.6" fill="#ddd"/><rect x="3.2" y="4.800000000000001" width="1.6" height="1.6" fill="#ddd"/><rect x="6.4" y="4.800000000000001" width="1.6" height="1.6" fill="#ddd"/><rect x="1.6" y="6.4" width="1.6" height="1.6" fill="#ddd"/><rect x="4.800000000000001" y="6.4" width="1.6" height="1.6" fill="#ddd"/></svg>
<svg style="left:1298px;top:492.1px;" width="8" height="8" viewBox="0 0 8 8"><rect x="1.6" y="0.0" width="1.6" height="1.6" fill="#ddd"/><rect x="4.800000000000001" y="0.0" width="1.6" height="1.6" fill="#ddd"/><rect x="0.0" y="1.6" width="1.6" height="1.6" fill="#ddd"/><rect x="3.2" y="1.6" width="1.6" height="1.6" fill="#ddd"/><rect x="6.4" y="1.6" width="1.6" height="1.6" fill="#ddd"/><rect x="1.6" y="3.2" width="1.6" height="1.6" fill="#ddd"/><rect x="4.800000000000001" y="3.2" width="1.6" height="1.6" fill="#ddd"/><rect x="0.0" y="4.800000000000001" width="1.6" height="1.6" fill="#ddd"/><rect x="3.2" y="4.800000000000001" width="1.6" height="1.6" fill="#ddd"/><rect x="6.4" y="4.800000000000001" width="1.6" height="1.6" fill="#ddd"/><rect x="1.6" y="6.4" width="1.6" height="1.6" fill="#ddd"/><rect x="4.800000000000001" y="6.4" width="1.6" height="1.6" fill="#ddd"/></svg>
<svg style="left:1298px;top:521.0px;" width="8" height="8" viewBox="0 0 8 8"><rect x="1.6" y="0.0" width="1.6" height="1.6" fill="#b8c8d8"/><rect x="4.800000000000001" y="0.0" width="1.6" height="1.6" fill="#b8c8d8"/><rect x="0.0" y="1.6" width="1.6" height="1.6" fill="#b8c8d8"/><rect x="3.2" y="1.6" width="1.6" height="1.6" fill="#b8c8d8"/><rect x="6.4" y="1.6" width="1.6" height="1.6" fill="#b8c8d8"/><rect x="1.6" y="3.2" width="1.6" height="1.6" fill="#b8c8d8"/><rect x="4.800000000000001" y="3.2" width="1.6" height="1.6" fill="#b8c8d8"/><rect x="0.0" y="4.800000000000001" width="1.6" height="1.6" fill="#b8c8d8"/><rect x="3.2" y="4.800000000000001" width="1.6" height="1.6" fill="#b8c8d8"/><rect x="6.4" y="4.800000000000001" width="1.6" height="1.6" fill="#b8c8d8"/><rect x="1.6" y="6.4" width="1.6" height="1.6" fill="#b8c8d8"/><rect x="4.800000000000001" y="6.4" width="1.6" height="1.6" fill="#b8c8d8"/></svg>
<svg style="left:1298px;top:549.9px;" width="8" height="8" viewBox="0 0 8 8"><rect x="1.6" y="0.0" width="1.6" height="1.6" fill="#b8c8d8"/><rect x="4.800000000000001" y="0.0" width="1.6" height="1.6" fill="#b8c8d8"/><rect x="0.0" y="1.6" width="1.6" height="1.6" fill="#b8c8d8"/><rect x="3.2" y="1.6" width="1.6" height="1.6" fill="#b8c8d8"/><rect x="6.4" y="1.6" width="1.6" height="1.6" fill="#b8c8d8"/><rect x="1.6" y="3.2" width="1.6" height="1.6" fill="#b8c8d8"/><rect x="4.800000000000001" y="3.2" width="1.6" height="1.6" fill="#b8c8d8"/><rect x="0.0" y="4.800000000000001" width="1.6" height="1.6" fill="#b8c8d8"/><rect x="3.2" y="4.800000000000001" width="1.6" height="1.6" fill="#b8c8d8"/><rect x="6.4" y="4.800000000000001" width="1.6" height="1.6" fill="#b8c8d8"/><rect x="1.6" y="6.4" width="1.6" height="1.6" fill="#b8c8d8"/><rect x="4.800000000000001" y="6.4" width="1.6" height="1.6" fill="#b8c8d8"/></svg>
<svg style="left:1298px;top:578.8px;" width="8" height="8" viewBox="0 0 8 8"><rect x="1.6" y="0.0" width="1.6" height="1.6" fill="#b8c8d8"/><rect x="4.800000000000001" y="0.0" width="1.6" height="1.6" fill="#b8c8d8"/><rect x="0.0" y="1.6" width="1.6" height="1.6" fill="#b8c8d8"/><rect x="3.2" y="1.6" width="1.6" height="1.6" fill="#b8c8d8"/><rect x="6.4" y="1.6" width="1.6" height="1.6" fill="#b8c8d8"/><rect x="1.6" y="3.2" width="1.6" height="1.6" fill="#b8c8d8"/><rect x="4.800000000000001" y="3.2" width="1.6" height="1.6" fill="#b8c8d8"/><rect x="0.0" y="4.800000000000001" width="1.6" height="1.6" fill="#b8c8d8"/><rect x="3.2" y="4.800000000000001" width="1.6" height="1.6" fill="#b8c8d8"/><rect x="6.4" y="4.800000000000001" width="1.6" height="1.6" fill="#b8c8d8"/><rect x="1.6" y="6.4" width="1.6" height="1.6" fill="#b8c8d8"/><rect x="4.800000000000001" y="6.4" width="1.6" height="1.6" fill="#b8c8d8"/></svg>
<svg style="left:1298px;top:607.7px;" width="8" height="8" viewBox="0 0 8 8"><rect x="1.6" y="0.0" width="1.6" height="1.6" fill="#b8c8d8"/><rect x="4.800000000000001" y="0.0" width="1.6" height="1.6" fill="#b8c8d8"/><rect x="0.0" y="1.6" width="1.6" height="1.6" fill="#b8c8d8"/><rect x="3.2" y="1.6" width="1.6" height="1.6" fill="#b8c8d8"/><rect x="6.4" y="1.6" width="1.6" height="1.6" fill="#b8c8d8"/><rect x="1.6" y="3.2" width="1.6" height="1.6" fill="#b8c8d8"/><rect x="4.800000000000001" y="3.2" width="1.6" height="1.6" fill="#b8c8d8"/><rect x="0.0" y="4.800000000000001" width="1.6" height="1.6" fill="#b8c8d8"/><rect x="3.2" y="4.800000000000001" width="1.6" height="1.6" fill="#b8c8d8"/><rect x="6.4" y="4.800000000000001" width="1.6" height="1.6" fill="#b8c8d8"/><rect x="1.6" y="6.4" width="1.6" height="1.6" fill="#b8c8d8"/><rect x="4.800000000000001" y="6.4" width="1.6" height="1.6" fill="#b8c8d8"/></svg>
<svg style="left:1305px;top:396px;" width="25" height="26" viewBox="0 0 25 26"><path d="M4,1 L25,1 L25,26 L6,26 L5,20 L3,12 L4,6 Z" fill="#505050"/><path d="M3,4 Q8,8 12,5 L17,3 M17,3 Q20,10 19,16 Q17,20 15,23 M3,8 Q5,18 7,25" stroke="#c8c8c8" stroke-width="0.9" fill="none" stroke-dasharray="1.2 0.8"/></svg>
<svg style="left:1311px;top:425px;" width="25" height="26" viewBox="0 0 25 26"><path d="M1,9 L7,9 L13,11 L15,16 L12,15.5 L7,13.5 L2,12 Z" fill="#505050"/><path d="M19,10 L23,9 L24,13 L21,14 Z" fill="#6a6a6a"/></svg>
<svg style="left:1311px;top:454px;" width="25" height="26" viewBox="0 0 25 26"><path d="M1,3 L6,1 L11,5 L13,10 L17,14 L16,19 L21,25 L12,25 L8,18 L3,12 Z" fill="#505050"/><path d="M17,9 L23,7 L25,10 L20,13 Z" fill="#505050"/></svg>
<svg style="left:1311px;top:512px;" width="25" height="26" viewBox="0 0 25 26"><path d="M18,1 L19,8 L15,17 L11,18 L12,24 L9,23 L8,17 L4,14 L8,9 L14,6 Z" fill="#555"/></svg>
<svg style="left:1311px;top:541px;" width="25" height="26" viewBox="0 0 25 26"><path d="M8,1 L13,2 L12,8 L14,14 L20,24 L15,22 L9,15 L8,8 L6,4 Z" fill="#555"/></svg>
<svg style="left:1311px;top:570px;" width="25" height="26" viewBox="0 0 25 26"><path d="M11,1 L13,4 L10,8 L12,12 L15,15 L18,20 L14,24 L10,16 L8,9 L7,5 Z" fill="#555"/></svg>
<svg style="left:1311px;top:599px;" width="25" height="21" viewBox="0 0 25 21"><path d="M11,1 L15,3 L16,10 L14,14 L17,21 L9,21 L9,12 L7,7 Z" fill="#555"/></svg>
<div class="a" style="left:1293px;top:621px;width:16px;height:16px;background:#282828;"></div>
<svg style="left:1295px;top:623px;" width="13" height="13" viewBox="0 0 13 13"><rect x="0.8" y="0.8" width="7.5" height="7.5" fill="none" stroke="#aaa" stroke-width="1.1"/><path d="M9.5,3 L10.5,3 L10.5,10.5 L3,10.5 L3,9.5" fill="none" stroke="#aaa" stroke-width="1.1"/><path d="M12,5 L12.3,12.3 L5,12.3" fill="none" stroke="#aaa" stroke-width="1.1"/></svg>
<svg style="left:1371px;top:623px;" width="12" height="12" viewBox="0 0 12 12"><rect x="0" y="1.5" width="11" height="9" fill="#aaa"/><circle cx="5.5" cy="6" r="2.6" fill="#333"/></svg>
<svg style="left:1386px;top:623px;" width="13" height="13" viewBox="0 0 13 13"><circle cx="6.4" cy="6.4" r="5.5" fill="none" stroke="#aaa" stroke-width="1.1"/><path d="M10,3 A4.2,4.2 0 0 1 3,10 Z" fill="#aaa"/></svg>
<svg style="left:1403px;top:623px;" width="11" height="13" viewBox="0 0 11 13"><rect x="0.5" y="0.5" width="10" height="1" fill="#aaa"/><rect x="0.5" y="11.5" width="10" height="1" fill="#aaa"/><text x="0.3" y="10" font-family="Liberation Sans" font-size="9" font-weight="bold" fill="#aaa">fx</text></svg>
<svg style="left:1419px;top:623px;" width="9" height="12" viewBox="0 0 9 12"><path d="M1,1 L8,1 L4.5,6 Z M1,11 L8,11 L4.5,6 Z" fill="#aaa"/></svg>
<svg style="left:1451px;top:623px;" width="14" height="13" viewBox="0 0 14 13"><path d="M1,3 L5,3 L6,1.5 L13,1.5 L13,12 L1,12 Z" fill="#aaa"/><rect x="1.8" y="4.3" width="10.4" height="6.8" fill="#999"/></svg>
<svg style="left:1469px;top:623px;" width="9" height="13" viewBox="0 0 9 13"><rect x="0.5" y="0.5" width="8" height="12" fill="none" stroke="#aaa" stroke-width="1"/></svg>
<svg style="left:1470.5px;top:625.5px;" width="8" height="8" viewBox="0 0 8 8"><rect x="1.6" y="0.0" width="1.6" height="1.6" fill="#aaa"/><rect x="4.800000000000001" y="0.0" width="1.6" height="1.6" fill="#aaa"/><rect x="0.0" y="1.6" width="1.6" height="1.6" fill="#aaa"/><rect x="3.2" y="1.6" width="1.6" height="1.6" fill="#aaa"/><rect x="6.4" y="1.6" width="1.6" height="1.6" fill="#aaa"/><rect x="1.6" y="3.2" width="1.6" height="1.6" fill="#aaa"/><rect x="4.800000000000001" y="3.2" width="1.6" height="1.6" fill="#aaa"/><rect x="0.0" y="4.800000000000001" width="1.6" height="1.6" fill="#aaa"/><rect x="3.2" y="4.800000000000001" width="1.6" height="1.6" fill="#aaa"/><rect x="6.4" y="4.800000000000001" width="1.6" height="1.6" fill="#aaa"/><rect x="1.6" y="6.4" width="1.6" height="1.6" fill="#aaa"/><rect x="4.800000000000001" y="6.4" width="1.6" height="1.6" fill="#aaa"/></svg>
<svg style="left:1484px;top:622px;" width="10" height="14" viewBox="0 0 10 14"><rect x="0" y="2" width="10" height="1.2" fill="#aaa"/><rect x="3.5" y="0.5" width="3" height="1.5" fill="#aaa"/><path d="M1.3,3.5 L2,13 L8,13 L8.7,3.5" fill="none" stroke="#aaa" stroke-width="1.1"/><path d="M4,5 L4,11 M6,5 L6,11" stroke="#aaa" stroke-width="0.9"/></svg>
<div class="a" style="left:1289px;top:640px;width:211px;height:23px;background:#272727;"></div>
<div class="a" style="left:1294px;top:649px;width:1px;height:6px;background:#6a6a6a;"></div>
<div class="a" style="left:1297px;top:649px;width:1px;height:6px;background:#6a6a6a;"></div>
<div class="a" style="left:1394.2px;top:640px;width:33.8px;height:23px;background:#333;"></div>
<div class="t" style="left:1306.70px;top:647.00px;font-size:8.6px;color:#c4c4c4;">Navigator</div>
<div class="t" style="left:1352.00px;top:647.00px;font-size:8.6px;color:#c4c4c4;letter-spacing:-0.25px">Transform</div>
<div class="t" style="left:1397.20px;top:647.00px;font-size:8.8px;color:#e8e8e8;">History</div>
<div class="a" style="left:1486px;top:647px;width:8.5px;height:1.4px;background:#d0d0d0;"></div>
<div class="a" style="left:1486px;top:650px;width:8.5px;height:1.4px;background:#d0d0d0;"></div>
<div class="a" style="left:1486px;top:653px;width:8.5px;height:1.4px;background:#d0d0d0;"></div>
<div class="t" style="left:1296.80px;top:672.50px;font-size:8.6px;color:#c4c4c4;">Position:</div>
<div class="a" style="left:1338.3px;top:673.6px;width:148px;height:3.6px;background:#4f7db5;border-radius:2px"></div>
<svg style="left:1481px;top:670px;" width="11" height="11" viewBox="0 0 11 11"><circle cx="5.7" cy="5.4" r="4.3" fill="#e8e8e8"/></svg>
<div class="a" style="left:1289px;top:686.6px;width:197px;height:137.4px;background:#333;"></div>
<div class="a" style="left:1486px;top:686.6px;width:14px;height:137.4px;background:#3a3a3a;"></div>
<svg style="left:1490px;top:690px;" width="8" height="7" viewBox="0 0 8 7"><path d="M0.5,6 L3.5,0.8 L6.5,6 Z" fill="#888"/></svg>
<svg style="left:1490px;top:813px;" width="8" height="7" viewBox="0 0 8 7"><path d="M0.5,0.8 L3.5,6 L6.5,0.8 Z" fill="#888"/></svg>
<div class="a" style="left:1490.8px;top:794.8px;width:5.3px;height:14.7px;background:#585858;border-radius:3px"></div>
<div class="a" style="left:1289px;top:686.6px;width:197px;height:17.2px;background:#333;"></div>
<div class="t" style="left:1309.30px;top:692.60px;font-size:9.1px;color:#e4e4e4;">Flood Fill</div>
<svg style="left:1291px;top:688.6px;" width="13" height="13" viewBox="0 0 13 13"><path d="M2.5,4 A5,5 0 1 0 10.5,4.5" fill="none" stroke="#888" stroke-width="1"/><path d="M1,2.5 L3.5,2 L3,5" fill="none" stroke="#888" stroke-width="0.9"/><path d="M6,7 L11,1.5" stroke="#aaa" stroke-width="2.6" stroke-linecap="round"/><path d="M2.5,10 Q3,7 5.5,6.5 L6.5,7.5 Q6,10 2.5,10 Z" fill="#aaa"/></svg>
<div class="a" style="left:1289px;top:703.8000000000001px;width:197px;height:17.2px;background:#2c2c2c;"></div>
<div class="t" style="left:1309.30px;top:709.80px;font-size:9.1px;color:#e4e4e4;">Deselect</div>
<svg style="left:1291px;top:705.8000000000001px;" width="13" height="13" viewBox="0 0 13 13"><path d="M2.5,4 A5,5 0 1 0 10.5,4.5" fill="none" stroke="#888" stroke-width="1"/><path d="M1,2.5 L3.5,2 L3,5" fill="none" stroke="#888" stroke-width="0.9"/><path d="M6,7 L11,1.5" stroke="#aaa" stroke-width="2.6" stroke-linecap="round"/><path d="M2.5,10 Q3,7 5.5,6.5 L6.5,7.5 Q6,10 2.5,10 Z" fill="#aaa"/></svg>
<div class="a" style="left:1289px;top:721.0px;width:197px;height:17.2px;background:#333;"></div>
<div class="t" style="left:1309.30px;top:727.00px;font-size:9.1px;color:#e4e4e4;">Raster smart selection brush end drag</div>
<svg style="left:1291px;top:723.0px;" width="13" height="13" viewBox="0 0 13 13"><path d="M2.5,4 A5,5 0 1 0 10.5,4.5" fill="none" stroke="#888" stroke-width="1"/><path d="M1,2.5 L3.5,2 L3,5" fill="none" stroke="#888" stroke-width="0.9"/><path d="M6,7 L11,1.5" stroke="#aaa" stroke-width="2.6" stroke-linecap="round"/><path d="M2.5,10 Q3,7 5.5,6.5 L6.5,7.5 Q6,10 2.5,10 Z" fill="#aaa"/></svg>
<div class="a" style="left:1289px;top:738.2px;width:197px;height:17.2px;background:#2c2c2c;"></div>
<div class="t" style="left:1309.30px;top:744.20px;font-size:9.1px;color:#e4e4e4;">Deselect</div>
<svg style="left:1291px;top:740.2px;" width="13" height="13" viewBox="0 0 13 13"><path d="M2.5,4 A5,5 0 1 0 10.5,4.5" fill="none" stroke="#888" stroke-width="1"/><path d="M1,2.5 L3.5,2 L3,5" fill="none" stroke="#888" stroke-width="0.9"/><path d="M6,7 L11,1.5" stroke="#aaa" stroke-width="2.6" stroke-linecap="round"/><path d="M2.5,10 Q3,7 5.5,6.5 L6.5,7.5 Q6,10 2.5,10 Z" fill="#aaa"/></svg>
<div class="a" style="left:1289px;top:755.4px;width:197px;height:17.2px;background:#333;"></div>
<div class="t" style="left:1309.30px;top:761.40px;font-size:9.1px;color:#e4e4e4;">Paint Brush Tool</div>
<svg style="left:1291px;top:757.4px;" width="13" height="13" viewBox="0 0 13 13"><path d="M2.5,4 A5,5 0 1 0 10.5,4.5" fill="none" stroke="#888" stroke-width="1"/><path d="M1,2.5 L3.5,2 L3,5" fill="none" stroke="#888" stroke-width="0.9"/><path d="M6,7 L11,1.5" stroke="#aaa" stroke-width="2.6" stroke-linecap="round"/><path d="M2.5,10 Q3,7 5.5,6.5 L6.5,7.5 Q6,10 2.5,10 Z" fill="#aaa"/></svg>
<div class="a" style="left:1289px;top:772.6px;width:197px;height:17.2px;background:#2c2c2c;"></div>
<div class="t" style="left:1309.30px;top:778.60px;font-size:9.1px;color:#e4e4e4;">Paint Brush Tool</div>
<svg style="left:1291px;top:774.6px;" width="13" height="13" viewBox="0 0 13 13"><path d="M2.5,4 A5,5 0 1 0 10.5,4.5" fill="none" stroke="#888" stroke-width="1"/><path d="M1,2.5 L3.5,2 L3,5" fill="none" stroke="#888" stroke-width="0.9"/><path d="M6,7 L11,1.5" stroke="#aaa" stroke-width="2.6" stroke-linecap="round"/><path d="M2.5,10 Q3,7 5.5,6.5 L6.5,7.5 Q6,10 2.5,10 Z" fill="#aaa"/></svg>
<div class="a" style="left:1289px;top:789.8px;width:197px;height:17.2px;background:#4d6c91;"></div>
<div class="t" style="left:1309.30px;top:795.80px;font-size:9.1px;color:#e4e4e4;">Paint Brush Tool</div>
<svg style="left:1291px;top:791.8px;" width="13" height="13" viewBox="0 0 13 13"><path d="M2.5,4 A5,5 0 1 0 10.5,4.5" fill="none" stroke="#888" stroke-width="1"/><path d="M1,2.5 L3.5,2 L3,5" fill="none" stroke="#888" stroke-width="0.9"/><path d="M6,7 L11,1.5" stroke="#aaa" stroke-width="2.6" stroke-linecap="round"/><path d="M2.5,10 Q3,7 5.5,6.5 L6.5,7.5 Q6,10 2.5,10 Z" fill="#aaa"/></svg>
</body></html>
